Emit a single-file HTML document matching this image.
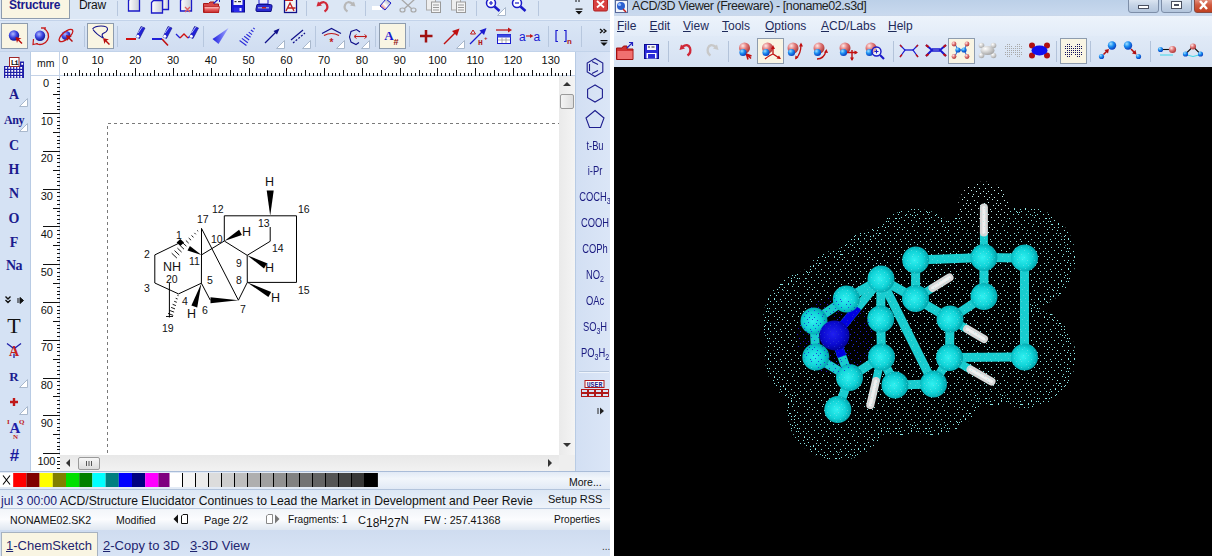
<!DOCTYPE html><html><head><meta charset="utf-8"><style>
html,body{margin:0;padding:0}
body{width:1212px;height:556px;overflow:hidden;position:relative;background:#fff;font-family:"Liberation Sans",sans-serif}
.a{position:absolute}
.t{position:absolute;white-space:nowrap;line-height:1}
</style></head><body>
<div class="a" style="left:0px;top:0px;width:610px;height:19px;background:#dce7f5"></div>
<div class="a" style="left:0px;top:19px;width:610px;height:1px;background:#eaf1fb"></div>
<div class="a" style="left:0px;top:20px;width:610px;height:1px;background:#c3d3ea"></div>
<div class="a" style="left:0px;top:21px;width:610px;height:31px;background:linear-gradient(#dae6f6,#d0ddf1)"></div>
<div class="a" style="left:0px;top:51px;width:610px;height:1px;background:#c2d3ea"></div>
<div class="a" style="left:1px;top:-2px;width:69px;height:21px;background:#f9f5e3;border:1px solid #8e9cae;box-sizing:border-box"></div>
<div class="t" style="left:9px;top:-1px;font-size:12px;color:#1a1a8c;letter-spacing:-0.25px"><b>Structure</b></div>
<div class="t" style="left:79px;top:-1px;font-size:12px;color:#111;letter-spacing:-0.3px">Draw</div>
<div class="a" style="left:1px;top:23px;width:27px;height:26px;background:#f9f5e3;border:1px solid #8e9cae;box-sizing:border-box"></div>
<div class="a" style="left:87px;top:23px;width:27px;height:26px;background:#f9f5e3;border:1px solid #8e9cae;box-sizing:border-box"></div>
<div class="a" style="left:379px;top:23px;width:27px;height:26px;background:#f9f5e3;border:1px solid #8e9cae;box-sizing:border-box"></div>
<div class="a" style="left:117px;top:1px;width:1px;height:15px;background:#b7c7de"></div>
<div class="a" style="left:306px;top:1px;width:1px;height:15px;background:#b7c7de"></div>
<div class="a" style="left:365px;top:1px;width:1px;height:15px;background:#b7c7de"></div>
<div class="a" style="left:476px;top:1px;width:1px;height:15px;background:#b7c7de"></div>
<div class="a" style="left:538px;top:1px;width:1px;height:15px;background:#b7c7de"></div>
<div class="a" style="left:84px;top:26px;width:1px;height:21px;background:#b7c7de"></div>
<div class="a" style="left:117px;top:26px;width:1px;height:21px;background:#b7c7de"></div>
<div class="a" style="left:203px;top:26px;width:1px;height:21px;background:#b7c7de"></div>
<div class="a" style="left:315px;top:26px;width:1px;height:21px;background:#b7c7de"></div>
<div class="a" style="left:375px;top:26px;width:1px;height:21px;background:#b7c7de"></div>
<div class="a" style="left:409px;top:26px;width:1px;height:21px;background:#b7c7de"></div>
<div class="a" style="left:548px;top:26px;width:1px;height:21px;background:#b7c7de"></div>
<div class="a" style="left:581px;top:26px;width:1px;height:21px;background:#b7c7de"></div>
<svg class="a" style="left:0px;top:0px;" width="610" height="20" viewBox="0 0 610 20"><defs><linearGradient id="dg" x1="0" x2="1"><stop offset="0" stop-color="#fff"/><stop offset="1" stop-color="#c8ccd4"/></linearGradient><linearGradient id="fg" x1="0" y1="0" x2="0" y2="1"><stop offset="0" stop-color="#ffd0d0"/><stop offset="0.5" stop-color="#e86060"/><stop offset="1" stop-color="#c02828"/></linearGradient><linearGradient id="erg" x1="0" y1="1" x2="1" y2="0"><stop offset="0" stop-color="#d01818"/><stop offset="0.45" stop-color="#fff"/><stop offset="1" stop-color="#8890a8"/></linearGradient></defs><path d="M128.5 0.5 L130.5 -1.5 H139.5 V11.0 H128.5 Z" fill="url(#dg)" stroke="#1a1ac8" stroke-width="1.3"/><path d="M162.5 -0.5 L164.5 -2.5 H168.5 V9.5 H162.5 Z" fill="url(#dg)" stroke="#1a1ac8" stroke-width="1.3"/><path d="M151.5 2.5 L153.5 0.5 H162.5 V13.0 H151.5 Z" fill="url(#dg)" stroke="#1a1ac8" stroke-width="1.3"/><path d="M180.5 0.5 L182.5 -1.5 H191.5 V11.0 H180.5 Z" fill="url(#dg)" stroke="#1a1ac8" stroke-width="1.3"/><path d="M185 7 L190 12 M190 7 L185 12" stroke="#e06060" stroke-width="1.3"/><path d="M203.5 3.5 H208.5 L210 2 H214 V4 H218.5 V12.5 H203.5 Z" fill="#d84848" stroke="#a81818"/><path d="M204 6.5 H219.5 L218.5 12.5 H204.5 Z" fill="url(#fg)" stroke="#b82020" stroke-width="0.8"/><path d="M213.5 3.5 L219 -1.5" stroke="#2020c0" stroke-width="1.2"/><path d="M216 -1.5 H219.5 V2" fill="none" stroke="#2020c0" stroke-width="1"/><rect x="231.5" y="-1" width="13" height="13" fill="#1a1ad8" stroke="#0a0a90"/><rect x="233.5" y="-1" width="9" height="6" fill="#f4f4f8"/><rect x="234.5" y="1" width="2" height="1.2" fill="#333"/><rect x="238" y="1" width="3" height="1.2" fill="#333"/><rect x="234" y="7.5" width="8" height="4.5" fill="#2a2ae8"/><rect x="239.5" y="8" width="2" height="3" fill="#e8e8f8"/><rect x="259" y="-1" width="9" height="5" fill="#eef" stroke="#1a1ac8"/><path d="M257 4.5 H270.5 Q272.5 4.5 272 7 L271 11.5 H257 Q255.5 11.5 256 9 Z" fill="#2a2ad0" stroke="#10108a"/><rect x="258" y="7" width="11" height="1.5" fill="#9aa0e0"/><rect x="262" y="7" width="4" height="1.5" fill="#c02020"/><rect x="284.5" y="-1" width="12" height="13.5" fill="#f4f4f4" stroke="#10108a" stroke-width="1.3"/><path d="M286 11 L290 3 L294 11 M287.5 8 H295.5" fill="none" stroke="#c02020" stroke-width="1.3"/><rect x="285" y="-1" width="8" height="2" fill="#c02020"/><path d="M319 4 Q325 0 327 5 Q328.5 9 324.5 11.5" fill="none" stroke="#d02838" stroke-width="2.2"/><path d="M316.5 6.5 L318 1.5 L322 5.5 Z" fill="#d02838"/><path d="M353 4 Q347 0 345 5 Q343.5 9 347.5 11.5" fill="none" stroke="#b8b8b8" stroke-width="2.2"/><path d="M355.5 6.5 L354 1.5 L350 5.5 Z" fill="#b8b8b8"/><rect x="372" y="6" width="10" height="4" fill="#fff"/><path d="M380 6 L386 -1 L391 3 L385 10 Z" fill="url(#erg)" stroke="#1a1ac8"/><path d="M401 -1 L412 9 M415 -1 L404 9" stroke="#a8a8a8" stroke-width="1.3"/><ellipse cx="402.5" cy="10" rx="2.5" ry="2" fill="none" stroke="#a8a8a8" stroke-width="1.2"/><ellipse cx="413.5" cy="10" rx="2.5" ry="2" fill="none" stroke="#a8a8a8" stroke-width="1.2"/><rect x="426.5" y="-1" width="9" height="11" fill="#eee" stroke="#aaa"/><rect x="431.5" y="2" width="9" height="10.5" fill="#f4f4f4" stroke="#999"/><path d="M433 5 h6 M433 7.5 h6 M433 10 h6" stroke="#999"/><rect x="451.5" y="-1" width="9" height="11" fill="#eee" stroke="#aaa"/><rect x="456.5" y="2" width="9" height="10.5" fill="#f4f4f4" stroke="#999"/><path d="M458 5 h6 M458 7.5 h6 M458 10 h6" stroke="#999"/><circle cx="491" cy="3" r="4.5" fill="#fff" stroke="#1a1ac8" stroke-width="1.5"/><path d="M489 3 h4 M491 1 v4" stroke="#1a1ac8" stroke-width="1.2"/><path d="M494.5 6.5 L499.5 11" stroke="#1a1ac8" stroke-width="2.5"/><circle cx="517" cy="3" r="4.5" fill="#fff" stroke="#1a1ac8" stroke-width="1.5"/><path d="M515 3 h4" stroke="#1a1ac8" stroke-width="1.2"/><path d="M520.5 6.5 L525.5 11" stroke="#1a1ac8" stroke-width="2.5"/><path d="M505.5 7.5 V15.5 H497.5 Z" fill="#fff" stroke="#a9b8cc"/><path d="M576 0 v2 M579 0 v2" stroke="#111"/><rect x="575.5" y="8.5" width="7" height="1.2" fill="#111"/><path d="M575.5 11 H582.5 L579 14.5 Z" fill="#111"/><rect x="593.5" y="-3" width="14" height="14" rx="1.5" fill="#d84040" stroke="#b02020"/><path d="M597 1 L604 7.5 M604 1 L597 7.5" stroke="#fff" stroke-width="1.8"/></svg>
<svg class="a" style="left:0px;top:0px;" width="610" height="52" viewBox="0 0 610 52"><defs><radialGradient id="bs" cx="0.4" cy="0.35" r="0.6"><stop offset="0" stop-color="#b0b8ff"/><stop offset="0.6" stop-color="#3a44e0"/><stop offset="1" stop-color="#1a20a0"/></radialGradient><linearGradient id="wg" x1="0" y1="0" x2="1" y2="0"><stop offset="0" stop-color="#2020e0"/><stop offset="1" stop-color="#a0a8ff"/></linearGradient></defs><circle cx="14" cy="35.5" r="5.2" fill="url(#bs)"/><path d="M15.5 37 L21.5 38.5 L19.0 39.5 L22.5 43 L21.5 44 L18.0 40.5 L17.0 43 Z" fill="#b80c0c"/><circle cx="40" cy="35.8" r="5.2" fill="url(#bs)"/><path d="M44 28.5 A8 8 0 0 1 36 43.5" fill="none" stroke="#c81818" stroke-width="1.4"/><path d="M33.5 39 L33 44.5 L38 43.5" fill="none" stroke="#c81818" stroke-width="1.2"/><path d="M41 28 H46" stroke="#c81818" stroke-width="1.4"/><circle cx="66" cy="35.5" r="4.6" fill="url(#bs)"/><ellipse cx="66" cy="35.5" rx="8.5" ry="3.5" transform="rotate(-40 66 35.5)" fill="none" stroke="#c81818" stroke-width="1.3"/><path d="M66 35 L72 36.5 L69.5 37.5 L73 41 L72 42 L68.5 38.5 L67.5 41 Z" fill="#b80c0c"/><path d="M92.5 29 Q95 26 101 26 Q108 26 107.5 29.5 Q107 32 103 33.5 Q101 35 103.5 38" fill="none" stroke="#10108a" stroke-width="1.1"/><path d="M93 29.5 Q96 34 103 38" fill="none" stroke="#10108a" stroke-width="1.1"/><path d="M103 38 L109 39.5 L106.5 40.5 L110 44 L109 45 L105.5 41.5 L104.5 44 Z" fill="#b80c0c"/><path d="M126 39 H136" stroke="#d01010" stroke-width="2"/><path d="M136 37 L141 26.5 L145 28 L139.5 38.5 Z" fill="#2222d8" stroke="#10108a" stroke-width="0.6"/><path d="M138 33 L142.2 27" stroke="#c8d0ff" stroke-width="0.9"/><circle cx="137.8" cy="36.2" r="1.5" fill="#fff"/><path d="M152 39 H162" stroke="#2020d8" stroke-width="2"/><path d="M162 39 L168 45.5" stroke="#c01010" stroke-width="1.6"/><path d="M163 37 L168 26.5 L172 28 L166.5 38.5 Z" fill="#2222d8" stroke="#10108a" stroke-width="0.6"/><path d="M165 33 L169.2 27" stroke="#c8d0ff" stroke-width="0.9"/><circle cx="164.8" cy="36.2" r="1.5" fill="#fff"/><path d="M176 34 L180 38" stroke="#2020d8" stroke-width="1.3"/><path d="M180 38 L184 34 L188 38" fill="none" stroke="#d01010" stroke-width="1.3"/><path d="M188 38 L190 36" stroke="#2020d8" stroke-width="1.3"/><path d="M189.5 37 L194.5 26.5 L198.5 28 L193.0 38.5 Z" fill="#2222d8" stroke="#10108a" stroke-width="0.6"/><path d="M191.5 33 L195.7 27" stroke="#c8d0ff" stroke-width="0.9"/><circle cx="191.3" cy="36.2" r="1.5" fill="#fff"/><path d="M212.5 39 L228.5 28 L218.5 44 Z" fill="url(#wg)"/><line x1="239.6" y1="40.5" x2="246.4" y2="45.5" stroke="#2a2ad8" stroke-width="1.1"/><line x1="241.9" y1="38.4" x2="247.8" y2="42.8" stroke="#2a2ad8" stroke-width="1.1"/><line x1="244.2" y1="36.3" x2="249.2" y2="40.0" stroke="#2a2ad8" stroke-width="1.1"/><line x1="246.4" y1="34.2" x2="250.6" y2="37.3" stroke="#2a2ad8" stroke-width="1.1"/><line x1="248.7" y1="32.1" x2="252.0" y2="34.6" stroke="#2a2ad8" stroke-width="1.1"/><line x1="250.9" y1="30.0" x2="253.4" y2="31.8" stroke="#2a2ad8" stroke-width="1.1"/><line x1="253.2" y1="27.9" x2="254.8" y2="29.1" stroke="#2a2ad8" stroke-width="1.1"/><path d="M265 43 L278 30" stroke="#10108a" stroke-width="1.2"/><path d="M279.5 28.5 L273.5 31 L277 34.5 Z" fill="#10108a"/><path d="M291 40 L303 30" stroke="#10108a" stroke-width="1.2"/><path d="M293 43 L305 33" stroke="#10108a" stroke-width="1.2" stroke-dasharray="2 1.5"/><path d="M284.5 40.5 V48.5 H276.5 Z" fill="#fff" stroke="#a9b8cc"/><path d="M310.5 40.5 V48.5 H302.5 Z" fill="#fff" stroke="#a9b8cc"/><path d="M344.5 40.5 V48.5 H336.5 Z" fill="#fff" stroke="#a9b8cc"/><path d="M369.5 40.5 V48.5 H361.5 Z" fill="#fff" stroke="#a9b8cc"/><path d="M464.5 40.5 V48.5 H456.5 Z" fill="#fff" stroke="#a9b8cc"/><path d="M322 33.5 L331.5 28.5 L341 33.5" fill="none" stroke="#10108a" stroke-width="1.2"/><path d="M324 35.5 Q331.5 31.5 339 35.5" fill="none" stroke="#c01818" stroke-width="1.2"/><text x="331.5" y="46" font-family="Liberation Sans" font-size="10" font-weight="bold" fill="#c01818" text-anchor="middle">*</text><path d="M360 32 L356.5 29.5 L351 31.5 L349.5 37 L351 42 L356 44.5 L359 42.5" fill="none" stroke="#10108a" stroke-width="1.1"/><path d="M355 36.5 H366" stroke="#c01818" stroke-width="1.1"/><path d="M356.5 34.5 L354 36.5 L356.5 38.5 M364.5 34.5 L367 36.5 L364.5 38.5" fill="none" stroke="#c01818" stroke-width="1"/><text x="389" y="39.5" font-family="Liberation Serif" font-weight="bold" font-size="13" fill="#1a1ad0" text-anchor="middle">A</text><text x="396" y="45" font-family="Liberation Sans" font-weight="bold" font-size="9" fill="#901010" text-anchor="middle">#</text><path d="M426 30 V42.5 M420 36 H432.5" stroke="#a01010" stroke-width="2.5"/><path d="M444 44 L457 31" stroke="#c01010" stroke-width="1.5"/><path d="M459.5 28.5 L452 31 L457 36 Z" fill="#c01010"/><path d="M470 44 L484 30" stroke="#1a1ad0" stroke-width="1.3"/><path d="M486.5 28 L479.5 30.5 L484 35 Z" fill="#1a1ad0"/><path d="M470.5 34 L473 30 L475.5 34 Z" fill="none" stroke="#c01818" stroke-width="1"/><text x="478" y="45" font-family="Liberation Mono" font-weight="bold" font-size="8" fill="#b01818">H</text><text x="484" y="40" font-family="Liberation Mono" font-weight="bold" font-size="6" fill="#b01818">+</text><path d="M496 30 H510" stroke="#c01818" stroke-width="1.3"/><path d="M512 30 L508 27.5 V32.5 Z" fill="#c01818"/><rect x="497.5" y="34.5" width="13" height="9" fill="#fff" stroke="#1a1ad0"/><rect x="497.5" y="34.5" width="13" height="3" fill="#3a4ae0"/><path d="M498 40 H510 M502 37.5 V43 M506 37.5 V43" stroke="#999" stroke-width="0.8"/><text x="519" y="40.5" font-family="Liberation Sans" font-size="12" fill="#1a1ad0">a</text><path d="M526 36 H532" stroke="#c01818" stroke-width="1.2"/><path d="M533.5 36 L530 34 V38 Z" fill="#c01818"/><text x="533.5" y="40.5" font-family="Liberation Sans" font-size="12" fill="#1a1ad0">a</text><path d="M558 30.5 H556 V41.5 H558 M564 30.5 H566 V41.5 H564" fill="none" stroke="#1a1ad0" stroke-width="1.2"/><text x="567" y="43.5" font-family="Liberation Mono" font-weight="bold" font-size="8" fill="#b01818">n</text><path d="M600 29 L602.5 31 L600 33 M603.5 29 L606 31 L603.5 33" fill="none" stroke="#111" stroke-width="1.3"/><rect x="600.5" y="40" width="7" height="1.2" fill="#111"/><path d="M600.5 42.5 H607.5 L604 46 Z" fill="#111"/></svg>
<div class="a" style="left:0px;top:52px;width:30px;height:420px;background:#d5e2f4"></div>
<div class="a" style="left:30px;top:52px;width:1px;height:420px;background:#b8cbe4"></div>
<div class="a" style="left:575px;top:52px;width:35px;height:420px;background:linear-gradient(90deg,#d2dff3,#dbe6f7)"></div>
<div class="a" style="left:575px;top:52px;width:1px;height:420px;background:#b8cbe4"></div>
<div class="a" style="left:31px;top:52px;width:544px;height:24px;background:#fff"></div>
<div class="a" style="left:31px;top:52px;width:29px;height:404px;background:#fff"></div>
<div class="a" style="left:31px;top:75px;width:544px;height:1px;background:#c5d3e8"></div>
<div class="a" style="left:59px;top:52px;width:1px;height:404px;background:#c5d3e8"></div>
<div class="a" style="left:60px;top:76px;width:499px;height:380px;background:#fff"></div>
<div class="a" style="left:559px;top:76px;width:16px;height:380px;background:#eef0f2"></div>
<div class="a" style="left:31px;top:456px;width:544px;height:16px;background:#eceff2"></div>
<svg class="a" style="left:0px;top:0px;" width="610" height="472" viewBox="0 0 610 472"><g fill="#111"><rect x="64" y="73" width="1" height="3"/><rect x="67" y="73" width="1" height="3"/><rect x="71" y="73" width="1" height="3"/><rect x="75" y="73" width="1" height="3"/><rect x="79" y="70" width="1" height="6"/><rect x="82" y="73" width="1" height="3"/><rect x="86" y="73" width="1" height="3"/><rect x="90" y="73" width="1" height="3"/><rect x="94" y="73" width="1" height="3"/><rect x="98" y="68" width="1" height="8"/><rect x="101" y="73" width="1" height="3"/><rect x="105" y="73" width="1" height="3"/><rect x="109" y="73" width="1" height="3"/><rect x="113" y="73" width="1" height="3"/><rect x="116" y="70" width="1" height="6"/><rect x="120" y="73" width="1" height="3"/><rect x="124" y="73" width="1" height="3"/><rect x="128" y="73" width="1" height="3"/><rect x="132" y="73" width="1" height="3"/><rect x="135" y="68" width="1" height="8"/><rect x="139" y="73" width="1" height="3"/><rect x="143" y="73" width="1" height="3"/><rect x="147" y="73" width="1" height="3"/><rect x="150" y="73" width="1" height="3"/><rect x="154" y="70" width="1" height="6"/><rect x="158" y="73" width="1" height="3"/><rect x="162" y="73" width="1" height="3"/><rect x="166" y="73" width="1" height="3"/><rect x="169" y="73" width="1" height="3"/><rect x="173" y="68" width="1" height="8"/><rect x="177" y="73" width="1" height="3"/><rect x="181" y="73" width="1" height="3"/><rect x="184" y="73" width="1" height="3"/><rect x="188" y="73" width="1" height="3"/><rect x="192" y="70" width="1" height="6"/><rect x="196" y="73" width="1" height="3"/><rect x="199" y="73" width="1" height="3"/><rect x="203" y="73" width="1" height="3"/><rect x="207" y="73" width="1" height="3"/><rect x="211" y="68" width="1" height="8"/><rect x="215" y="73" width="1" height="3"/><rect x="218" y="73" width="1" height="3"/><rect x="222" y="73" width="1" height="3"/><rect x="226" y="73" width="1" height="3"/><rect x="230" y="70" width="1" height="6"/><rect x="233" y="73" width="1" height="3"/><rect x="237" y="73" width="1" height="3"/><rect x="241" y="73" width="1" height="3"/><rect x="245" y="73" width="1" height="3"/><rect x="249" y="68" width="1" height="8"/><rect x="252" y="73" width="1" height="3"/><rect x="256" y="73" width="1" height="3"/><rect x="260" y="73" width="1" height="3"/><rect x="264" y="73" width="1" height="3"/><rect x="267" y="70" width="1" height="6"/><rect x="271" y="73" width="1" height="3"/><rect x="275" y="73" width="1" height="3"/><rect x="279" y="73" width="1" height="3"/><rect x="283" y="73" width="1" height="3"/><rect x="286" y="68" width="1" height="8"/><rect x="290" y="73" width="1" height="3"/><rect x="294" y="73" width="1" height="3"/><rect x="298" y="73" width="1" height="3"/><rect x="301" y="73" width="1" height="3"/><rect x="305" y="70" width="1" height="6"/><rect x="309" y="73" width="1" height="3"/><rect x="313" y="73" width="1" height="3"/><rect x="317" y="73" width="1" height="3"/><rect x="320" y="73" width="1" height="3"/><rect x="324" y="68" width="1" height="8"/><rect x="328" y="73" width="1" height="3"/><rect x="332" y="73" width="1" height="3"/><rect x="335" y="73" width="1" height="3"/><rect x="339" y="73" width="1" height="3"/><rect x="343" y="70" width="1" height="6"/><rect x="347" y="73" width="1" height="3"/><rect x="351" y="73" width="1" height="3"/><rect x="354" y="73" width="1" height="3"/><rect x="358" y="73" width="1" height="3"/><rect x="362" y="68" width="1" height="8"/><rect x="366" y="73" width="1" height="3"/><rect x="369" y="73" width="1" height="3"/><rect x="373" y="73" width="1" height="3"/><rect x="377" y="73" width="1" height="3"/><rect x="381" y="70" width="1" height="6"/><rect x="385" y="73" width="1" height="3"/><rect x="388" y="73" width="1" height="3"/><rect x="392" y="73" width="1" height="3"/><rect x="396" y="73" width="1" height="3"/><rect x="400" y="68" width="1" height="8"/><rect x="403" y="73" width="1" height="3"/><rect x="407" y="73" width="1" height="3"/><rect x="411" y="73" width="1" height="3"/><rect x="415" y="73" width="1" height="3"/><rect x="419" y="70" width="1" height="6"/><rect x="422" y="73" width="1" height="3"/><rect x="426" y="73" width="1" height="3"/><rect x="430" y="73" width="1" height="3"/><rect x="434" y="73" width="1" height="3"/><rect x="437" y="68" width="1" height="8"/><rect x="441" y="73" width="1" height="3"/><rect x="445" y="73" width="1" height="3"/><rect x="449" y="73" width="1" height="3"/><rect x="453" y="73" width="1" height="3"/><rect x="456" y="70" width="1" height="6"/><rect x="460" y="73" width="1" height="3"/><rect x="464" y="73" width="1" height="3"/><rect x="468" y="73" width="1" height="3"/><rect x="471" y="73" width="1" height="3"/><rect x="475" y="68" width="1" height="8"/><rect x="479" y="73" width="1" height="3"/><rect x="483" y="73" width="1" height="3"/><rect x="487" y="73" width="1" height="3"/><rect x="490" y="73" width="1" height="3"/><rect x="494" y="70" width="1" height="6"/><rect x="498" y="73" width="1" height="3"/><rect x="502" y="73" width="1" height="3"/><rect x="505" y="73" width="1" height="3"/><rect x="509" y="73" width="1" height="3"/><rect x="513" y="68" width="1" height="8"/><rect x="517" y="73" width="1" height="3"/><rect x="521" y="73" width="1" height="3"/><rect x="524" y="73" width="1" height="3"/><rect x="528" y="73" width="1" height="3"/><rect x="532" y="70" width="1" height="6"/><rect x="536" y="73" width="1" height="3"/><rect x="539" y="73" width="1" height="3"/><rect x="543" y="73" width="1" height="3"/><rect x="547" y="73" width="1" height="3"/><rect x="551" y="68" width="1" height="8"/><rect x="555" y="73" width="1" height="3"/><rect x="558" y="73" width="1" height="3"/><rect x="562" y="73" width="1" height="3"/><rect x="566" y="73" width="1" height="3"/><rect x="570" y="70" width="1" height="6"/><rect x="57" y="79" width="3" height="1"/><rect x="57" y="83" width="3" height="1"/><rect x="57" y="87" width="3" height="1"/><rect x="57" y="91" width="3" height="1"/><rect x="53" y="94" width="7" height="1"/><rect x="57" y="98" width="3" height="1"/><rect x="57" y="102" width="3" height="1"/><rect x="57" y="106" width="3" height="1"/><rect x="57" y="109" width="3" height="1"/><rect x="43" y="113" width="17" height="1"/><rect x="57" y="117" width="3" height="1"/><rect x="57" y="121" width="3" height="1"/><rect x="57" y="125" width="3" height="1"/><rect x="57" y="128" width="3" height="1"/><rect x="53" y="132" width="7" height="1"/><rect x="57" y="136" width="3" height="1"/><rect x="57" y="140" width="3" height="1"/><rect x="57" y="143" width="3" height="1"/><rect x="57" y="147" width="3" height="1"/><rect x="43" y="151" width="17" height="1"/><rect x="57" y="155" width="3" height="1"/><rect x="57" y="158" width="3" height="1"/><rect x="57" y="162" width="3" height="1"/><rect x="57" y="166" width="3" height="1"/><rect x="53" y="170" width="7" height="1"/><rect x="57" y="174" width="3" height="1"/><rect x="57" y="177" width="3" height="1"/><rect x="57" y="181" width="3" height="1"/><rect x="57" y="185" width="3" height="1"/><rect x="43" y="189" width="17" height="1"/><rect x="57" y="192" width="3" height="1"/><rect x="57" y="196" width="3" height="1"/><rect x="57" y="200" width="3" height="1"/><rect x="57" y="204" width="3" height="1"/><rect x="53" y="208" width="7" height="1"/><rect x="57" y="211" width="3" height="1"/><rect x="57" y="215" width="3" height="1"/><rect x="57" y="219" width="3" height="1"/><rect x="57" y="223" width="3" height="1"/><rect x="43" y="226" width="17" height="1"/><rect x="57" y="230" width="3" height="1"/><rect x="57" y="234" width="3" height="1"/><rect x="57" y="238" width="3" height="1"/><rect x="57" y="242" width="3" height="1"/><rect x="53" y="245" width="7" height="1"/><rect x="57" y="249" width="3" height="1"/><rect x="57" y="253" width="3" height="1"/><rect x="57" y="257" width="3" height="1"/><rect x="57" y="260" width="3" height="1"/><rect x="43" y="264" width="17" height="1"/><rect x="57" y="268" width="3" height="1"/><rect x="57" y="272" width="3" height="1"/><rect x="57" y="276" width="3" height="1"/><rect x="57" y="279" width="3" height="1"/><rect x="53" y="283" width="7" height="1"/><rect x="57" y="287" width="3" height="1"/><rect x="57" y="291" width="3" height="1"/><rect x="57" y="294" width="3" height="1"/><rect x="57" y="298" width="3" height="1"/><rect x="43" y="302" width="17" height="1"/><rect x="57" y="306" width="3" height="1"/><rect x="57" y="310" width="3" height="1"/><rect x="57" y="313" width="3" height="1"/><rect x="57" y="317" width="3" height="1"/><rect x="53" y="321" width="7" height="1"/><rect x="57" y="325" width="3" height="1"/><rect x="57" y="328" width="3" height="1"/><rect x="57" y="332" width="3" height="1"/><rect x="57" y="336" width="3" height="1"/><rect x="43" y="340" width="17" height="1"/><rect x="57" y="344" width="3" height="1"/><rect x="57" y="347" width="3" height="1"/><rect x="57" y="351" width="3" height="1"/><rect x="57" y="355" width="3" height="1"/><rect x="53" y="359" width="7" height="1"/><rect x="57" y="362" width="3" height="1"/><rect x="57" y="366" width="3" height="1"/><rect x="57" y="370" width="3" height="1"/><rect x="57" y="374" width="3" height="1"/><rect x="43" y="378" width="17" height="1"/><rect x="57" y="381" width="3" height="1"/><rect x="57" y="385" width="3" height="1"/><rect x="57" y="389" width="3" height="1"/><rect x="57" y="393" width="3" height="1"/><rect x="53" y="396" width="7" height="1"/><rect x="57" y="400" width="3" height="1"/><rect x="57" y="404" width="3" height="1"/><rect x="57" y="408" width="3" height="1"/><rect x="57" y="412" width="3" height="1"/><rect x="43" y="415" width="17" height="1"/><rect x="57" y="419" width="3" height="1"/><rect x="57" y="423" width="3" height="1"/><rect x="57" y="427" width="3" height="1"/><rect x="57" y="430" width="3" height="1"/><rect x="53" y="434" width="7" height="1"/><rect x="57" y="438" width="3" height="1"/><rect x="57" y="442" width="3" height="1"/><rect x="57" y="446" width="3" height="1"/><rect x="57" y="449" width="3" height="1"/><rect x="43" y="453" width="17" height="1"/></g></svg>
<div class="t" style="left:62px;top:55px;font-size:11px;color:#111">0</div>
<div class="t" style="left:77.5px;top:55px;width:40px;text-align:center;font-size:11px;color:#111">10</div>
<div class="t" style="left:115.3px;top:55px;width:40px;text-align:center;font-size:11px;color:#111">20</div>
<div class="t" style="left:153.1px;top:55px;width:40px;text-align:center;font-size:11px;color:#111">30</div>
<div class="t" style="left:190.8px;top:55px;width:40px;text-align:center;font-size:11px;color:#111">40</div>
<div class="t" style="left:228.6px;top:55px;width:40px;text-align:center;font-size:11px;color:#111">50</div>
<div class="t" style="left:266.4px;top:55px;width:40px;text-align:center;font-size:11px;color:#111">60</div>
<div class="t" style="left:304.1px;top:55px;width:40px;text-align:center;font-size:11px;color:#111">70</div>
<div class="t" style="left:341.9px;top:55px;width:40px;text-align:center;font-size:11px;color:#111">80</div>
<div class="t" style="left:379.7px;top:55px;width:40px;text-align:center;font-size:11px;color:#111">90</div>
<div class="t" style="left:417.4px;top:55px;width:40px;text-align:center;font-size:11px;color:#111">100</div>
<div class="t" style="left:455.2px;top:55px;width:40px;text-align:center;font-size:11px;color:#111">110</div>
<div class="t" style="left:493.0px;top:55px;width:40px;text-align:center;font-size:11px;color:#111">120</div>
<div class="t" style="left:530.8px;top:55px;width:40px;text-align:center;font-size:11px;color:#111">130</div>
<div class="t" style="left:37px;top:58px;font-size:10.5px;color:#111">mm</div>
<div class="t" style="left:43px;top:77.5px;font-size:11px;color:#111">0</div>
<div class="t" style="left:13px;top:115.7px;width:40px;text-align:right;font-size:11px;color:#111">10</div>
<div class="t" style="left:13px;top:153.4px;width:40px;text-align:right;font-size:11px;color:#111">20</div>
<div class="t" style="left:13px;top:191.2px;width:40px;text-align:right;font-size:11px;color:#111">30</div>
<div class="t" style="left:13px;top:229.0px;width:40px;text-align:right;font-size:11px;color:#111">40</div>
<div class="t" style="left:13px;top:266.8px;width:40px;text-align:right;font-size:11px;color:#111">50</div>
<div class="t" style="left:13px;top:304.5px;width:40px;text-align:right;font-size:11px;color:#111">60</div>
<div class="t" style="left:13px;top:342.3px;width:40px;text-align:right;font-size:11px;color:#111">70</div>
<div class="t" style="left:13px;top:380.1px;width:40px;text-align:right;font-size:11px;color:#111">80</div>
<div class="t" style="left:13px;top:417.8px;width:40px;text-align:right;font-size:11px;color:#111">90</div>
<svg class="a" style="left:60px;top:76px;" width="499" height="379" viewBox="0 0 499 379"><path d="M47.5 455 V47.5 H499" fill="none" stroke="#7a7a7a" stroke-width="1" stroke-dasharray="3 3"/></svg>
<svg class="a" style="left:4px;top:57px;" width="21" height="21" viewBox="0 0 21 21"><rect x="0" y="9" width="20" height="12" fill="#1e1ea8"/><rect x="16" y="4.5" width="4" height="5" fill="#1e1ea8"/><rect x="1.3" y="10" width="1.8" height="1.8" fill="#fff"/><rect x="4.3" y="10" width="1.8" height="1.8" fill="#fff"/><rect x="7.3" y="10" width="1.8" height="1.8" fill="#fff"/><rect x="10.3" y="10" width="1.8" height="1.8" fill="#fff"/><rect x="13.3" y="10" width="1.8" height="1.8" fill="#fff"/><rect x="16.3" y="10" width="1.8" height="1.8" fill="#fff"/><rect x="1.3" y="13" width="1.8" height="1.8" fill="#fff"/><rect x="4.3" y="13" width="1.8" height="1.8" fill="#fff"/><rect x="7.3" y="13" width="1.8" height="1.8" fill="#fff"/><rect x="10.3" y="13" width="1.8" height="1.8" fill="#fff"/><rect x="13.3" y="13" width="1.8" height="1.8" fill="#fff"/><rect x="16.3" y="13" width="1.8" height="1.8" fill="#fff"/><rect x="1.3" y="16" width="1.8" height="1.8" fill="#fff"/><rect x="4.3" y="16" width="1.8" height="1.8" fill="#fff"/><rect x="7.3" y="16" width="1.8" height="1.8" fill="#fff"/><rect x="10.3" y="16" width="1.8" height="1.8" fill="#fff"/><rect x="13.3" y="16" width="1.8" height="1.8" fill="#fff"/><rect x="16.3" y="16" width="1.8" height="1.8" fill="#fff"/><rect x="1.3" y="19" width="1.8" height="1.8" fill="#fff"/><rect x="4.3" y="19" width="1.8" height="1.8" fill="#fff"/><rect x="7.3" y="19" width="1.8" height="1.8" fill="#fff"/><rect x="10.3" y="19" width="1.8" height="1.8" fill="#fff"/><rect x="13.3" y="19" width="1.8" height="1.8" fill="#fff"/><rect x="16.3" y="19" width="1.8" height="1.8" fill="#fff"/><rect x="17.3" y="6" width="1.8" height="1.8" fill="#fff"/><rect x="5.5" y="0.5" width="9.5" height="9" fill="#fff" stroke="#a02828"/><text x="10.3" y="7.6" font-family="Liberation Mono" font-size="7.5" font-weight="bold" fill="#111" text-anchor="middle" letter-spacing="-1">Li</text></svg>
<div class="t" style="left:-6px;top:95px;width:40px;text-align:center;font-family:'Liberation Serif', serif;font-weight:bold;font-size:14px;color:#1b1b8e;line-height:0;">A</div>
<svg class="a" style="left:19px;top:98px;" width="9" height="9" viewBox="0 0 9 9"><path d="M8.5 0.5 V8.5 H0.5 Z" fill="#fff" stroke="#a9b8cc" stroke-width="1"/></svg>
<div class="t" style="left:-6px;top:120px;width:40px;text-align:center;font-family:'Liberation Serif', serif;font-weight:bold;font-size:12px;color:#1b1b8e;line-height:0;letter-spacing:-0.5px">Any</div>
<svg class="a" style="left:19px;top:123px;" width="9" height="9" viewBox="0 0 9 9"><path d="M8.5 0.5 V8.5 H0.5 Z" fill="#fff" stroke="#a9b8cc" stroke-width="1"/></svg>
<div class="t" style="left:-6px;top:146px;width:40px;text-align:center;font-family:'Liberation Serif', serif;font-weight:bold;font-size:14px;color:#1b1b8e;line-height:0;">C</div>
<div class="t" style="left:-6px;top:170px;width:40px;text-align:center;font-family:'Liberation Serif', serif;font-weight:bold;font-size:14px;color:#1b1b8e;line-height:0;">H</div>
<div class="t" style="left:-6px;top:194px;width:40px;text-align:center;font-family:'Liberation Serif', serif;font-weight:bold;font-size:14px;color:#1b1b8e;line-height:0;">N</div>
<div class="t" style="left:-6px;top:219px;width:40px;text-align:center;font-family:'Liberation Serif', serif;font-weight:bold;font-size:14px;color:#1b1b8e;line-height:0;">O</div>
<div class="t" style="left:-6px;top:243px;width:40px;text-align:center;font-family:'Liberation Serif', serif;font-weight:bold;font-size:14px;color:#1b1b8e;line-height:0;">F</div>
<div class="t" style="left:-6px;top:266px;width:40px;text-align:center;font-family:'Liberation Serif', serif;font-weight:bold;font-size:14px;color:#1b1b8e;line-height:0;letter-spacing:-0.5px">Na</div>
<svg class="a" style="left:4px;top:295px;" width="22" height="10" viewBox="0 0 22 10"><path d="M1.5 1.5 L4 4 L6.5 1.5 M1.5 5 L4 7.5 L6.5 5" fill="none" stroke="#111" stroke-width="1.4"/><path d="M14 3 v5 M16 2.5 L19.5 5.5 L16 8.5 Z" stroke="#111" stroke-width="1" fill="#111"/></svg>
<div class="t" style="left:-6px;top:326px;width:40px;text-align:center;font-family:'Liberation Serif', serif;font-weight:bold;font-size:22px;color:#111;line-height:0;font-weight:normal">T</div>
<svg class="a" style="left:5px;top:342px;" width="18" height="17" viewBox="0 0 18 17"><text x="9" y="14" font-family="Liberation Serif" font-weight="bold" font-size="14" fill="#c82020" text-anchor="middle">A</text><path d="M2 1.5 L8 6 M16 1.5 L10 6 M9 11.5 V16" stroke="#1e1ea8" stroke-width="1.3"/></svg>
<div class="t" style="left:-6px;top:377px;width:40px;text-align:center;font-family:'Liberation Serif', serif;font-weight:bold;font-size:13px;color:#1b1b8e;line-height:0;">R</div>
<svg class="a" style="left:19px;top:379px;" width="9" height="9" viewBox="0 0 9 9"><path d="M8.5 0.5 V8.5 H0.5 Z" fill="#fff" stroke="#a9b8cc" stroke-width="1"/></svg>
<svg class="a" style="left:9px;top:397px;" width="10" height="10" viewBox="0 0 10 10"><path d="M5 1 V9 M1 5 H9" stroke="#c01818" stroke-width="2.4"/></svg>
<svg class="a" style="left:19px;top:406px;" width="9" height="9" viewBox="0 0 9 9"><path d="M8.5 0.5 V8.5 H0.5 Z" fill="#fff" stroke="#a9b8cc" stroke-width="1"/></svg>
<svg class="a" style="left:5px;top:417px;" width="20" height="22" viewBox="0 0 20 22"><text x="10" y="16" font-family="Liberation Serif" font-weight="bold" font-size="15" fill="#1e1ea8" text-anchor="middle">A</text><text x="2" y="7" font-family="Liberation Serif" font-weight="bold" font-size="7" fill="#c01818">I</text><text x="14" y="7" font-family="Liberation Serif" font-weight="bold" font-size="7" fill="#c01818">Q</text><text x="8" y="22" font-family="Liberation Serif" font-weight="bold" font-size="7" fill="#c01818">N</text></svg>
<div class="t" style="left:0px;top:447px;width:29px;text-align:center;font-family:Liberation Sans;font-weight:bold;font-size:17px;color:#1b1b9e">#</div>
<svg class="a" style="left:585px;top:57px;" width="20" height="22" viewBox="0 0 20 22"><path d="M10.0 1.5 L2.2 6.0 L2.2 15.0 L10.0 19.5 L17.8 15.0 L17.8 6.0 Z" fill="none" stroke="#1e1e8e" stroke-width="1.1"/><path d="M4.5 7 V14 M7 4.5 L13 7.5 M7 16.5 L13 13.5" stroke="#1e1e8e" stroke-width="1.1"/></svg>
<svg class="a" style="left:585px;top:83px;" width="20" height="22" viewBox="0 0 20 22"><path d="M10.0 2.0 L2.6 6.3 L2.6 14.8 L10.0 19.0 L17.4 14.8 L17.4 6.2 Z" fill="none" stroke="#1e1e8e" stroke-width="1.1"/></svg>
<svg class="a" style="left:584px;top:109px;" width="22" height="20" viewBox="0 0 22 20"><path d="M11 1.5 L20 9 L16.5 18.5 H5.5 L2 9 Z" fill="none" stroke="#1e1e8e" stroke-width="1.1"/></svg>
<div class="t" style="left:560px;top:146px;width:70px;text-align:center;font-size:12px;color:#1a1a80;line-height:0;transform:scaleX(0.78);transform-origin:35px 0">t-Bu</div>
<div class="t" style="left:560px;top:171px;width:70px;text-align:center;font-size:12px;color:#1a1a80;line-height:0;transform:scaleX(0.78);transform-origin:35px 0">i-Pr</div>
<div class="t" style="left:560px;top:197px;width:70px;text-align:center;font-size:12px;color:#1a1a80;line-height:0;transform:scaleX(0.78);transform-origin:35px 0">COCH<sub style="font-size:9px;vertical-align:-3px">3</sub></div>
<div class="t" style="left:560px;top:223px;width:70px;text-align:center;font-size:12px;color:#1a1a80;line-height:0;transform:scaleX(0.78);transform-origin:35px 0">COOH</div>
<div class="t" style="left:560px;top:249px;width:70px;text-align:center;font-size:12px;color:#1a1a80;line-height:0;transform:scaleX(0.78);transform-origin:35px 0">COPh</div>
<div class="t" style="left:560px;top:275px;width:70px;text-align:center;font-size:12px;color:#1a1a80;line-height:0;transform:scaleX(0.78);transform-origin:35px 0">NO<sub style="font-size:9px;vertical-align:-3px">2</sub></div>
<div class="t" style="left:560px;top:301px;width:70px;text-align:center;font-size:12px;color:#1a1a80;line-height:0;transform:scaleX(0.78);transform-origin:35px 0">OAc</div>
<div class="t" style="left:560px;top:327px;width:70px;text-align:center;font-size:12px;color:#1a1a80;line-height:0;transform:scaleX(0.78);transform-origin:35px 0">SO<sub style="font-size:9px;vertical-align:-3px">3</sub>H</div>
<div class="t" style="left:560px;top:353px;width:70px;text-align:center;font-size:12px;color:#1a1a80;line-height:0;transform:scaleX(0.78);transform-origin:35px 0">PO<sub style="font-size:9px;vertical-align:-3px">3</sub>H<sub style="font-size:9px;vertical-align:-3px">2</sub></div>
<div class="a" style="left:579px;top:371px;width:30px;height:1px;background:#b8c8de"></div>
<div class="a" style="left:579px;top:372px;width:30px;height:1px;background:#eef4fc"></div>
<svg class="a" style="left:581px;top:380px;" width="28" height="18" viewBox="0 0 28 18"><rect x="4" y="0.5" width="19" height="7" fill="#fff" stroke="#b01818"/><text x="13.5" y="6.5" font-family="Liberation Mono" font-weight="bold" font-size="6.5" fill="#1e1e8e" text-anchor="middle">USER</text><rect x="0.5" y="9.5" width="6" height="3" fill="none" stroke="#b01818"/><rect x="7.5" y="9.5" width="6" height="3" fill="none" stroke="#b01818"/><rect x="14.5" y="9.5" width="6" height="3" fill="none" stroke="#b01818"/><rect x="21.5" y="9.5" width="6" height="3" fill="none" stroke="#b01818"/><rect x="0.5" y="13.5" width="6" height="3" fill="none" stroke="#b01818"/><rect x="7.5" y="13.5" width="6" height="3" fill="none" stroke="#b01818"/><rect x="14.5" y="13.5" width="6" height="3" fill="none" stroke="#b01818"/><rect x="21.5" y="13.5" width="6" height="3" fill="none" stroke="#b01818"/></svg>
<svg class="a" style="left:597px;top:407px;" width="9" height="8" viewBox="0 0 9 8"><path d="M1 1 v6" stroke="#222"/><path d="M3 0.5 L7 4 L3 7.5 Z" fill="#222"/></svg>
<div class="a" style="left:559px;top:76px;width:16px;height:379px;background:linear-gradient(90deg,#eaeaea,#f4f4f4)"></div>
<svg class="a" style="left:559px;top:76px;" width="16" height="379" viewBox="0 0 16 379"><path d="M4 10 L8 6 L12 10 Z" fill="#333"/><path d="M4 367 L12 367 L8 371 Z" fill="#333"/></svg>
<div class="a" style="left:560px;top:94px;width:14px;height:15px;background:linear-gradient(90deg,#f4f4f4,#dedede);border:1px solid #9a9a9a;border-radius:2px;box-sizing:border-box"></div>
<div class="a" style="left:60px;top:455px;width:499px;height:16px;background:linear-gradient(#e8e8e8,#f2f2f2)"></div>
<svg class="a" style="left:60px;top:455px;" width="499" height="16" viewBox="0 0 499 16"><path d="M10 4 L6 8 L10 12 Z" fill="#333"/><path d="M488 4 L492 8 L488 12 Z" fill="#333"/></svg>
<div class="a" style="left:78px;top:457px;width:22px;height:13px;background:linear-gradient(#f7f7f7,#dcdcdc);border:1px solid #9a9a9a;border-radius:2px;box-sizing:border-box"></div>
<svg class="a" style="left:78px;top:457px;" width="22" height="13" viewBox="0 0 22 13"><path d="M8.5 4 V9 M11 4 V9 M13.5 4 V9" stroke="#555" stroke-width="1"/></svg>
<div class="a" style="left:559px;top:455px;width:16px;height:16px;background:#eeeeee"></div>
<div class="a" style="left:31px;top:455px;width:29px;height:17px;background:#fff"></div>
<svg class="a" style="left:31px;top:450px;" width="29" height="22" viewBox="0 0 29 22"><rect x="12" y="3" width="17" height="1" fill="#111"/><g fill="#111"><rect x="26" y="7" width="3" height="1"/><rect x="26" y="11" width="3" height="1"/><rect x="26" y="14" width="3" height="1"/><rect x="26" y="18" width="3" height="1"/></g></svg>
<div class="t" style="left:15px;top:455.5px;width:40px;text-align:right;font-size:11px;color:#111;letter-spacing:-0.3px">100</div>
<div class="a" style="left:0px;top:471px;width:610px;height:19px;background:linear-gradient(#dfe8f5,#f2f6fb 40%,#dfe8f5)"></div>
<div class="a" style="left:0px;top:471px;width:610px;height:1px;background:#a9bcd8"></div>
<div class="a" style="left:0px;top:489px;width:610px;height:1px;background:#b3c4dc"></div>
<svg class="a" style="left:0px;top:473px;" width="380" height="14" viewBox="0 0 380 14"><rect x="0" y="0" width="13" height="14" fill="#fff"/><path d="M3 2.5 L10 11.5 M10 2.5 L3 11.5" stroke="#000" stroke-width="1.1"/><rect x="13.2" y="0" width="13.2" height="14" fill="#ff0000"/><rect x="26.4" y="0" width="13.2" height="14" fill="#800000"/><rect x="39.6" y="0" width="13.2" height="14" fill="#ffff00"/><rect x="52.8" y="0" width="13.2" height="14" fill="#808000"/><rect x="66.0" y="0" width="13.2" height="14" fill="#00e000"/><rect x="79.2" y="0" width="13.2" height="14" fill="#008000"/><rect x="92.4" y="0" width="13.2" height="14" fill="#00ffff"/><rect x="105.6" y="0" width="13.2" height="14" fill="#008080"/><rect x="118.8" y="0" width="13.2" height="14" fill="#0000ff"/><rect x="132.0" y="0" width="13.2" height="14" fill="#000080"/><rect x="145.2" y="0" width="13.2" height="14" fill="#ff00ff"/><rect x="158.4" y="0" width="13.2" height="14" fill="#800080"/><rect x="169.5" y="0" width="13.1" height="14" fill="rgb(255,255,255)"/><rect x="182.5" y="0" width="13.1" height="14" fill="rgb(245,245,245)"/><rect x="195.5" y="0" width="13.1" height="14" fill="rgb(235,235,235)"/><rect x="208.6" y="0" width="13.1" height="14" fill="rgb(220,220,220)"/><rect x="221.6" y="0" width="13.1" height="14" fill="rgb(205,205,205)"/><rect x="234.6" y="0" width="13.1" height="14" fill="rgb(190,190,190)"/><rect x="247.6" y="0" width="13.1" height="14" fill="rgb(175,175,175)"/><rect x="260.6" y="0" width="13.1" height="14" fill="rgb(160,160,160)"/><rect x="273.7" y="0" width="13.1" height="14" fill="rgb(145,145,145)"/><rect x="286.7" y="0" width="13.1" height="14" fill="rgb(130,130,130)"/><rect x="299.7" y="0" width="13.1" height="14" fill="rgb(115,115,115)"/><rect x="312.7" y="0" width="13.1" height="14" fill="rgb(100,100,100)"/><rect x="325.7" y="0" width="13.1" height="14" fill="rgb(85,85,85)"/><rect x="338.8" y="0" width="13.1" height="14" fill="rgb(70,70,70)"/><rect x="351.8" y="0" width="13.1" height="14" fill="rgb(55,55,55)"/><rect x="364.8" y="0" width="13.1" height="14" fill="rgb(0,0,0)"/><rect x="182" y="0" width="1" height="14" fill="#000"/><rect x="195" y="0" width="1" height="14" fill="#000"/><rect x="208" y="0" width="1" height="14" fill="#000"/><rect x="221" y="0" width="1" height="14" fill="#000"/><rect x="234" y="0" width="1" height="14" fill="#000"/><rect x="247" y="0" width="1" height="14" fill="#000"/><rect x="260" y="0" width="1" height="14" fill="#000"/><rect x="273" y="0" width="1" height="14" fill="#000"/><rect x="286" y="0" width="1" height="14" fill="#000"/><rect x="299" y="0" width="1" height="14" fill="#000"/><rect x="312" y="0" width="1" height="14" fill="#000"/><rect x="325" y="0" width="1" height="14" fill="#000"/><rect x="338" y="0" width="1" height="14" fill="#000"/><rect x="351" y="0" width="1" height="14" fill="#000"/><rect x="364" y="0" width="1" height="14" fill="#000"/></svg>
<div class="t" style="left:569px;top:477px;font-size:10.5px;color:#111">More...</div>
<div class="a" style="left:0px;top:490px;width:610px;height:19px;background:linear-gradient(#dce7f5,#eef3fa)"></div>
<div class="a" style="left:0px;top:508px;width:610px;height:1px;background:#b9c9df"></div>
<div class="t" style="left:1px;top:495px;font-size:12.15px;color:#111"><span style="color:#1a1a78">jul 3 00:00</span> ACD/Structure Elucidator Continues to Lead the Market in Development and Peer Revie</div>
<div class="a" style="left:540px;top:490px;width:70px;height:18px;background:linear-gradient(#dce7f5,#eef3fa)"></div>
<div class="t" style="left:548px;top:494px;font-size:11px;color:#111">Setup RSS</div>
<div class="a" style="left:0px;top:509px;width:610px;height:21px;background:linear-gradient(#f2f5f9,#fbfcfe 50%,#dfe7f1)"></div>
<div class="t" style="left:10px;top:515px;font-size:10.6px;color:#111">NONAME02.SK2</div>
<div class="t" style="left:116px;top:515px;font-size:10.5px;color:#111">Modified</div>
<svg class="a" style="left:173px;top:513px;" width="16" height="12" viewBox="0 0 16 12"><path d="M5 1.5 L0.5 6 L5 10.5 Z" fill="#111"/><path d="M8.5 3 L10 1.5 H14.5 V10.5 H8.5 Z" fill="#fff" stroke="#111"/></svg>
<div class="t" style="left:204px;top:515px;font-size:11px;color:#111">Page 2/2</div>
<svg class="a" style="left:265px;top:513px;" width="16" height="12" viewBox="0 0 16 12"><path d="M1.5 3 L3 1.5 H7.5 V10.5 H1.5 Z" fill="#fff" stroke="#888"/><path d="M10 1.5 L14.5 6 L10 10.5 Z" fill="#777"/></svg>
<div class="t" style="left:288px;top:515px;font-size:10.1px;color:#111">Fragments: 1</div>
<div class="t" style="left:358px;top:514px;font-size:11px;color:#111">C<span style="font-size:12px;position:relative;top:3px">18</span>H<span style="font-size:12px;position:relative;top:3px">27</span>N</div>
<div class="t" style="left:424px;top:515px;font-size:10.75px;color:#111">FW : 257.41368</div>
<div class="t" style="left:554px;top:515px;font-size:10.1px;color:#111">Properties</div>
<div class="a" style="left:0px;top:530px;width:610px;height:26px;background:linear-gradient(#cfdcf0,#d8e4f5)"></div>
<div class="a" style="left:1px;top:532px;width:97px;height:26px;background:#f9f5e3;border:1px solid #a7b2c0;box-sizing:border-box"></div>
<div class="t" style="left:6px;top:539px;font-size:13px;color:#1e2570"><u>1</u>-ChemSketch</div>
<div class="t" style="left:103px;top:539px;font-size:13px;color:#1e2570"><u>2</u>-Copy to 3D</div>
<div class="t" style="left:190px;top:539px;font-size:13px;color:#1e2570"><u>3</u>-3D View</div>
<div class="t" style="left:602px;top:542px;font-size:10px;color:#333">...</div>
<svg class="a" style="left:0px;top:0px;" width="330" height="340" viewBox="0 0 330 340"><g stroke="#000" stroke-width="1" fill="none"><line x1="154.8" y1="254.9" x2="180.3" y2="242.5"/><line x1="154.8" y1="254.9" x2="154.8" y2="283.0"/><line x1="154.8" y1="283.0" x2="178.5" y2="293.9"/><line x1="178.5" y1="293.9" x2="201.4" y2="283.2"/><line x1="201.4" y1="283.2" x2="201.5" y2="254.9"/><line x1="201.5" y1="254.9" x2="201.5" y2="228.4"/><line x1="201.5" y1="254.9" x2="224.3" y2="241.0"/><line x1="224.3" y1="215.8" x2="224.3" y2="241.0"/><line x1="224.3" y1="215.8" x2="270.2" y2="215.8"/><line x1="270.2" y1="215.8" x2="296.5" y2="215.8"/><line x1="296.5" y1="215.8" x2="296.5" y2="282.4"/><line x1="296.5" y1="282.4" x2="247.3" y2="282.4"/><line x1="247.3" y1="282.4" x2="247.2" y2="255.3"/><line x1="224.3" y1="241.0" x2="247.2" y2="255.3"/><line x1="247.2" y1="255.3" x2="270.2" y2="241.3"/><line x1="201.4" y1="283.2" x2="210.3" y2="300.2"/><line x1="238.4" y1="300.2" x2="247.3" y2="282.4"/><line x1="201.5" y1="228.4" x2="238.4" y2="300.2"/><line x1="270.2" y1="227" x2="270.2" y2="241.3"/><line x1="169.4" y1="283" x2="169.4" y2="317.5"/></g><path d="M270.2 215.8 L273.7 190.5 L266.7 190.5 Z" fill="#000"/><path d="M224.3 241.0 L241.9 234.9 L239.1 229.7 Z" fill="#000"/><path d="M247.2 255.3 L264.0 268.4 L267.0 263.2 Z" fill="#000"/><path d="M247.3 282.4 L268.4 297.1 L271.2 291.9 Z" fill="#000"/><path d="M201.4 283.2 L191.4 305.6 L197.2 307.4 Z" fill="#000"/><path d="M238.4 300.2 L210.5 297.2 L210.5 303.2 Z" fill="#000"/><path d="M201.5 254.9 L189.9 246.0 L187.5 250.4 Z" fill="#000"/><path d="M180.3 239 L184 242.5 L180.3 246 L176.6 242.5 Z" fill="#000"/><g stroke="#000" stroke-width="0.9"><line x1="197.2" y1="230.4" x2="198.2" y2="231.3"/><line x1="194.4" y1="232.9" x2="195.8" y2="234.3"/><line x1="191.5" y1="235.5" x2="193.5" y2="237.3"/><line x1="188.7" y1="238.0" x2="191.1" y2="240.2"/><line x1="185.9" y1="240.5" x2="188.7" y2="243.2"/><line x1="183.0" y1="243.1" x2="186.4" y2="246.2"/><line x1="180.2" y1="245.6" x2="184.0" y2="249.2"/><line x1="177.4" y1="248.1" x2="181.6" y2="252.1"/><line x1="174.5" y1="250.6" x2="179.3" y2="255.1"/><line x1="171.7" y1="253.2" x2="176.9" y2="258.1"/><line x1="177.3" y1="295.2" x2="178.5" y2="295.7"/><line x1="175.7" y1="298.3" x2="177.6" y2="299.0"/><line x1="174.2" y1="301.3" x2="176.8" y2="302.3"/><line x1="172.6" y1="304.3" x2="175.9" y2="305.6"/><line x1="171.1" y1="307.4" x2="175.0" y2="308.9"/><line x1="169.5" y1="310.4" x2="174.1" y2="312.1"/><line x1="168.0" y1="313.4" x2="173.2" y2="315.4"/><line x1="166" y1="316.5" x2="173" y2="316.5"/></g></svg>
<div class="t" style="left:197px;top:214px;font-size:10.5px;color:#111;line-height:1">17</div>
<div class="t" style="left:212px;top:204px;font-size:10.5px;color:#111;line-height:1">12</div>
<div class="t" style="left:298px;top:204px;font-size:10.5px;color:#111;line-height:1">16</div>
<div class="t" style="left:258px;top:218px;font-size:10.5px;color:#111;line-height:1">13</div>
<div class="t" style="left:176px;top:230px;font-size:10.5px;color:#111;line-height:1">1</div>
<div class="t" style="left:211px;top:234px;font-size:10.5px;color:#111;line-height:1">10</div>
<div class="t" style="left:144px;top:249px;font-size:10.5px;color:#111;line-height:1">2</div>
<div class="t" style="left:272px;top:243px;font-size:10.5px;color:#111;line-height:1">14</div>
<div class="t" style="left:189px;top:256px;font-size:10.5px;color:#111;line-height:1">11</div>
<div class="t" style="left:236px;top:258px;font-size:10.5px;color:#111;line-height:1">9</div>
<div class="t" style="left:166px;top:274px;font-size:10.5px;color:#111;line-height:1">20</div>
<div class="t" style="left:207px;top:275px;font-size:10.5px;color:#111;line-height:1">5</div>
<div class="t" style="left:236px;top:275px;font-size:10.5px;color:#111;line-height:1">8</div>
<div class="t" style="left:144px;top:283px;font-size:10.5px;color:#111;line-height:1">3</div>
<div class="t" style="left:298px;top:285px;font-size:10.5px;color:#111;line-height:1">15</div>
<div class="t" style="left:182px;top:296px;font-size:10.5px;color:#111;line-height:1">4</div>
<div class="t" style="left:202px;top:305px;font-size:10.5px;color:#111;line-height:1">6</div>
<div class="t" style="left:240px;top:304px;font-size:10.5px;color:#111;line-height:1">7</div>
<div class="t" style="left:162px;top:323px;font-size:10.5px;color:#111;line-height:1">19</div>
<div class="t" style="left:265px;top:176px;font-size:12.5px;color:#111;line-height:1">H</div>
<div class="t" style="left:242px;top:226px;font-size:12.5px;color:#111;line-height:1">H</div>
<div class="t" style="left:265px;top:262px;font-size:12.5px;color:#111;line-height:1">H</div>
<div class="t" style="left:271px;top:292px;font-size:12.5px;color:#111;line-height:1">H</div>
<div class="t" style="left:187px;top:308px;font-size:12.5px;color:#111;line-height:1">H</div>
<div class="t" style="left:163px;top:261px;font-size:12.5px;color:#111;line-height:1">NH</div>
<div class="a" style="left:610px;top:0px;width:4px;height:556px;background:#fff"></div>
<div class="a" style="left:614px;top:0px;width:598px;height:15px;background:linear-gradient(#bcd0e8,#c9d9ee)"></div>
<div class="a" style="left:614px;top:15px;width:598px;height:1px;background:#c9d7ea"></div>
<svg class="a" style="left:614px;top:0px;" width="15" height="14" viewBox="0 0 15 14"><rect x="1.5" y="0.5" width="12" height="12" fill="#f4f6fa" stroke="#5a6a9a"/><circle cx="7" cy="6" r="4" fill="#2a5fd0"/><circle cx="5.5" cy="4.5" r="1.6" fill="#9ac0ff"/><path d="M9 9 L12 12" stroke="#c02020" stroke-width="1.5"/></svg>
<div class="t" style="left:632px;top:0px;font-size:12.5px;color:#1e1e1e;letter-spacing:-0.45px">ACD/3D Viewer (Freeware) - [noname02.s3d]</div>
<div class="a" style="left:1128px;top:-3px;width:31px;height:16px;background:linear-gradient(#e3ebf5,#c6d4e6 50%,#b3c5dc);border:1px solid #7d8ea8;border-radius:3px;box-sizing:border-box"></div>
<svg class="a" style="left:1128px;top:0px;" width="31" height="13" viewBox="0 0 31 13"><rect x="10.5" y="5.5" width="10" height="3" fill="#fff" stroke="#4a5060"/></svg>
<div class="a" style="left:1161px;top:-3px;width:31px;height:16px;background:linear-gradient(#e3ebf5,#c6d4e6 50%,#b3c5dc);border:1px solid #7d8ea8;border-radius:3px;box-sizing:border-box"></div>
<svg class="a" style="left:1161px;top:0px;" width="31" height="13" viewBox="0 0 31 13"><rect x="10.5" y="1.5" width="10" height="7" fill="#fff" stroke="#4a5060"/><rect x="13" y="4" width="5" height="2" fill="#4a5060"/></svg>
<div class="a" style="left:1194px;top:-3px;width:22px;height:16px;background:linear-gradient(#e8a090,#d05a40 50%,#c04020);border:1px solid #8a4a40;border-radius:3px;box-sizing:border-box"></div>
<svg class="a" style="left:1194px;top:0px;" width="18" height="13" viewBox="0 0 18 13"><path d="M6 1 L13 9 M13 1 L6 9" stroke="#fff" stroke-width="2.4"/></svg>
<div class="a" style="left:614px;top:16px;width:598px;height:20px;background:linear-gradient(#edf3fb,#e3ecf8)"></div>
<div class="t" style="left:617px;top:20px;font-size:12px;color:#1e2a5a"><u>F</u>ile</div>
<div class="t" style="left:649.5px;top:20px;font-size:12px;color:#1e2a5a"><u>E</u>dit</div>
<div class="t" style="left:683px;top:20px;font-size:12px;color:#1e2a5a"><u>V</u>iew</div>
<div class="t" style="left:722px;top:20px;font-size:12px;color:#1e2a5a"><u>T</u>ools</div>
<div class="t" style="left:765px;top:20px;font-size:12px;color:#1e2a5a"><u>O</u>ptions</div>
<div class="t" style="left:821px;top:20px;font-size:12px;color:#1e2a5a"><u>A</u>CD/Labs</div>
<div class="t" style="left:888px;top:20px;font-size:12px;color:#1e2a5a"><u>H</u>elp</div>
<div class="a" style="left:614px;top:36px;width:598px;height:31px;background:linear-gradient(#e0eaf7,#d5e1f2)"></div>
<div class="a" style="left:668px;top:41px;width:1px;height:21px;background:#b3c3da"></div>
<div class="a" style="left:728px;top:41px;width:1px;height:21px;background:#b3c3da"></div>
<div class="a" style="left:893px;top:41px;width:1px;height:21px;background:#b3c3da"></div>
<div class="a" style="left:1056px;top:41px;width:1px;height:21px;background:#b3c3da"></div>
<div class="a" style="left:1090px;top:41px;width:1px;height:21px;background:#b3c3da"></div>
<div class="a" style="left:1150px;top:41px;width:1px;height:21px;background:#b3c3da"></div>
<div class="a" style="left:757px;top:38px;width:27px;height:26px;background:#f9f5e3;border:1px solid #8e9cae;box-sizing:border-box"></div>
<div class="a" style="left:948px;top:38px;width:27px;height:26px;background:#f9f5e3;border:1px solid #8e9cae;box-sizing:border-box"></div>
<div class="a" style="left:1060px;top:38px;width:27px;height:26px;background:#f9f5e3;border:1px solid #8e9cae;box-sizing:border-box"></div>
<svg class="a" style="left:0px;top:0px;" width="1212" height="67" viewBox="0 0 1212 67"><defs><radialGradient id="rs" cx="0.35" cy="0.3" r="0.7"><stop offset="0" stop-color="#ffe8e8"/><stop offset="0.5" stop-color="#e07878"/><stop offset="1" stop-color="#b03a3a"/></radialGradient><radialGradient id="bls" cx="0.35" cy="0.3" r="0.7"><stop offset="0" stop-color="#a0e0ff"/><stop offset="0.5" stop-color="#1a8cf0"/><stop offset="1" stop-color="#0a40c0"/></radialGradient><radialGradient id="gs" cx="0.35" cy="0.3" r="0.7"><stop offset="0" stop-color="#ffffff"/><stop offset="1" stop-color="#a8a8a8"/></radialGradient></defs><path d="M616.5 48 H622 L623.5 46 H627 V49 H633 V59.5 H616.5 Z" fill="#d03030" stroke="#a01010"/><rect x="617.5" y="51" width="15" height="8" fill="#f07070"/><path d="M627 48 L632.5 42.5 M629 42.5 H632.5 V46" fill="none" stroke="#2020c0" stroke-width="1.2"/><rect x="644.5" y="44.5" width="14" height="14" fill="#2a2ad8" stroke="#0a0a90"/><rect x="647" y="45" width="9" height="5" fill="#f4f4fa"/><path d="M648 47 h2 M651.5 47 h3" stroke="#333"/><rect x="646.5" y="53" width="10" height="5.5" fill="#fff"/><rect x="648" y="54" width="7" height="4.5" fill="#2a2ad8"/><path d="M682 47 Q688 43 690 48 Q691.5 52.5 687.5 55.5" fill="none" stroke="#d02838" stroke-width="2.3"/><path d="M679.5 50 L681 44.5 L685 48.5 Z" fill="#d02838"/><path d="M716 47 Q710 43 708 48 Q706.5 52.5 710.5 55.5" fill="none" stroke="#c8c8c8" stroke-width="2.3"/><path d="M718.5 50 L717 44.5 L713 48.5 Z" fill="#c8c8c8"/><circle cx="744.5" cy="48" r="5.5" fill="url(#rs)"/><circle cx="743.0" cy="52.5" r="3.6" fill="url(#bls)"/><path d="M746.5 54 L748 59.5 M746 54 L751.5 56 M747 54.5 L751 58.5" stroke="#c01010" stroke-width="1.6"/><circle cx="767.5" cy="48" r="5.5" fill="url(#rs)"/><circle cx="766.0" cy="52.5" r="3.6" fill="url(#bls)"/><path d="M765 59 Q770 55 773 54 L780 58.5 M773 54 L773 47" fill="none" stroke="#c01010" stroke-width="1.3"/><path d="M773 45 L771 49 H775 Z M781 59 L776.5 58.5 L779 55.5 Z" fill="#c01010"/><circle cx="793" cy="48" r="5.5" fill="url(#rs)"/><circle cx="791.5" cy="52.5" r="3.6" fill="url(#bls)"/><path d="M796 58.5 Q801 54 801 44" fill="none" stroke="#c01010" stroke-width="1.3"/><path d="M801 42.5 L799 46.5 H803 Z M795 59.5 L795.5 55.5 L798.5 57.5 Z" fill="#c01010"/><circle cx="819" cy="48" r="5.5" fill="url(#rs)"/><circle cx="817.5" cy="52.5" r="3.6" fill="url(#bls)"/><path d="M817 59 Q824 59 826 51" fill="none" stroke="#c01010" stroke-width="1.3"/><path d="M826.5 49 L824 52.5 L828 53 Z" fill="#c01010"/><circle cx="845" cy="48" r="5.5" fill="url(#rs)"/><circle cx="843.5" cy="52.5" r="3.6" fill="url(#bls)"/><path d="M852 50 V60 M847 52.5 H857" stroke="#c01010" stroke-width="1.4"/><path d="M858 52.5 L854.5 50.5 V54.5 Z M852 61 L850 57.5 H854 Z" fill="#c01010"/><circle cx="871" cy="48" r="5.5" fill="url(#rs)"/><circle cx="869.5" cy="52.5" r="3.6" fill="url(#bls)"/><circle cx="876.5" cy="51.5" r="4.5" fill="#fff" fill-opacity="0.5" stroke="#1a1ac8" stroke-width="1.4"/><path d="M874.5 51.5 h4 M876.5 49.5 v4" stroke="#1a1ac8" stroke-width="1.1"/><path d="M880 55 L884 59" stroke="#1a1ac8" stroke-width="2.2"/><path d="M905 50 H913" stroke="#1a1ad0" stroke-width="1.3"/><path d="M900 45 L905 50 L900 57 M918 45 L913 50 L918 57" fill="none" stroke="#1a1ad0" stroke-width="1.2"/><path d="M900 45 L902 47 M918 45 L916 47 M900 57 L902 54.5 M918 57 L916 54.5" stroke="#c01010" stroke-width="1.3"/><path d="M932 49 H940 M932 51 H940" stroke="#1a1ad0" stroke-width="1.3"/><path d="M926 45 L932 50 L926 56 M946 45 L940 50 L946 56" fill="none" stroke="#1a1ad0" stroke-width="2"/><path d="M926 45 L928.5 47 M946 45 L943.5 47 M926 56 L928.5 54 M946 56 L943.5 54" stroke="#c01010" stroke-width="2.2"/><path d="M955 44 L958 50 H964 L967 44 M955 56 L958 50 M964 50 L967 56" fill="none" stroke="#1a60d0" stroke-width="1"/><circle cx="954" cy="44" r="2.4" fill="url(#rs)"/><circle cx="967" cy="44" r="2.4" fill="url(#rs)"/><circle cx="954" cy="56.5" r="2.4" fill="url(#rs)"/><circle cx="967" cy="56.5" r="2.4" fill="url(#rs)"/><circle cx="958" cy="50" r="2.6" fill="url(#bls)"/><circle cx="964" cy="50" r="2.6" fill="url(#bls)"/><g fill="url(#gs)"><circle cx="981.5" cy="45.5" r="2.8"/><circle cx="993.5" cy="45.5" r="2.8"/><circle cx="981.5" cy="55.5" r="2.8"/><circle cx="993.5" cy="55.5" r="2.8"/><ellipse cx="987.5" cy="50.5" rx="7" ry="4.5"/></g><g fill="#a8a8a8"><rect x="1007" y="44" width="1" height="1"/><rect x="1009" y="44" width="1" height="1"/><rect x="1017" y="44" width="1" height="1"/><rect x="1019" y="44" width="1" height="1"/><rect x="1005" y="46" width="1" height="1"/><rect x="1007" y="46" width="1" height="1"/><rect x="1009" y="46" width="1" height="1"/><rect x="1011" y="46" width="1" height="1"/><rect x="1015" y="46" width="1" height="1"/><rect x="1017" y="46" width="1" height="1"/><rect x="1019" y="46" width="1" height="1"/><rect x="1021" y="46" width="1" height="1"/><rect x="1005" y="48" width="1" height="1"/><rect x="1007" y="48" width="1" height="1"/><rect x="1009" y="48" width="1" height="1"/><rect x="1011" y="48" width="1" height="1"/><rect x="1013" y="48" width="1" height="1"/><rect x="1015" y="48" width="1" height="1"/><rect x="1017" y="48" width="1" height="1"/><rect x="1019" y="48" width="1" height="1"/><rect x="1021" y="48" width="1" height="1"/><rect x="1007" y="50" width="1" height="1"/><rect x="1009" y="50" width="1" height="1"/><rect x="1011" y="50" width="1" height="1"/><rect x="1013" y="50" width="1" height="1"/><rect x="1015" y="50" width="1" height="1"/><rect x="1017" y="50" width="1" height="1"/><rect x="1019" y="50" width="1" height="1"/><rect x="1005" y="52" width="1" height="1"/><rect x="1007" y="52" width="1" height="1"/><rect x="1009" y="52" width="1" height="1"/><rect x="1011" y="52" width="1" height="1"/><rect x="1013" y="52" width="1" height="1"/><rect x="1015" y="52" width="1" height="1"/><rect x="1017" y="52" width="1" height="1"/><rect x="1019" y="52" width="1" height="1"/><rect x="1021" y="52" width="1" height="1"/><rect x="1005" y="54" width="1" height="1"/><rect x="1007" y="54" width="1" height="1"/><rect x="1009" y="54" width="1" height="1"/><rect x="1011" y="54" width="1" height="1"/><rect x="1015" y="54" width="1" height="1"/><rect x="1017" y="54" width="1" height="1"/><rect x="1019" y="54" width="1" height="1"/><rect x="1021" y="54" width="1" height="1"/><rect x="1007" y="56" width="1" height="1"/><rect x="1009" y="56" width="1" height="1"/><rect x="1017" y="56" width="1" height="1"/><rect x="1019" y="56" width="1" height="1"/></g><g fill="#b01010"><circle cx="1032" cy="45.5" r="3"/><circle cx="1047" cy="45.5" r="3"/><circle cx="1032" cy="55.5" r="3"/><circle cx="1047" cy="55.5" r="3"/></g><ellipse cx="1039.5" cy="50.5" rx="8" ry="5" fill="#1010f0"/><g fill="#101060"><rect x="1067" y="44" width="1" height="1"/><rect x="1069" y="44" width="1" height="1"/><rect x="1077" y="44" width="1" height="1"/><rect x="1079" y="44" width="1" height="1"/><rect x="1065" y="46" width="1" height="1"/><rect x="1067" y="46" width="1" height="1"/><rect x="1069" y="46" width="1" height="1"/><rect x="1071" y="46" width="1" height="1"/><rect x="1075" y="46" width="1" height="1"/><rect x="1077" y="46" width="1" height="1"/><rect x="1079" y="46" width="1" height="1"/><rect x="1081" y="46" width="1" height="1"/><rect x="1065" y="48" width="1" height="1"/><rect x="1067" y="48" width="1" height="1"/><rect x="1069" y="48" width="1" height="1"/><rect x="1071" y="48" width="1" height="1"/><rect x="1073" y="48" width="1" height="1"/><rect x="1075" y="48" width="1" height="1"/><rect x="1077" y="48" width="1" height="1"/><rect x="1079" y="48" width="1" height="1"/><rect x="1081" y="48" width="1" height="1"/><rect x="1067" y="50" width="1" height="1"/><rect x="1069" y="50" width="1" height="1"/><rect x="1071" y="50" width="1" height="1"/><rect x="1073" y="50" width="1" height="1"/><rect x="1075" y="50" width="1" height="1"/><rect x="1077" y="50" width="1" height="1"/><rect x="1079" y="50" width="1" height="1"/><rect x="1065" y="52" width="1" height="1"/><rect x="1067" y="52" width="1" height="1"/><rect x="1069" y="52" width="1" height="1"/><rect x="1071" y="52" width="1" height="1"/><rect x="1073" y="52" width="1" height="1"/><rect x="1075" y="52" width="1" height="1"/><rect x="1077" y="52" width="1" height="1"/><rect x="1079" y="52" width="1" height="1"/><rect x="1081" y="52" width="1" height="1"/><rect x="1065" y="54" width="1" height="1"/><rect x="1067" y="54" width="1" height="1"/><rect x="1069" y="54" width="1" height="1"/><rect x="1071" y="54" width="1" height="1"/><rect x="1075" y="54" width="1" height="1"/><rect x="1077" y="54" width="1" height="1"/><rect x="1079" y="54" width="1" height="1"/><rect x="1081" y="54" width="1" height="1"/><rect x="1067" y="56" width="1" height="1"/><rect x="1069" y="56" width="1" height="1"/><rect x="1077" y="56" width="1" height="1"/><rect x="1079" y="56" width="1" height="1"/></g><circle cx="1101.5" cy="56.5" r="2.6" fill="url(#bls)"/><circle cx="1112" cy="45.5" r="4.2" fill="url(#bls)"/><path d="M1103.5 54.5 L1107.5 50.5" stroke="#b01010" stroke-width="1.6"/><path d="M1109 49 L1104.5 50 L1108 53.5 Z" fill="#b01010"/><circle cx="1138.5" cy="56.5" r="2.6" fill="url(#bls)"/><circle cx="1128" cy="45.5" r="4.2" fill="url(#bls)"/><path d="M1131 49 L1135 53" stroke="#b01010" stroke-width="1.6"/><path d="M1136.5 54.5 L1132 53.5 L1135.5 50 Z" fill="#b01010"/><path d="M1160.5 49.5 H1172" stroke="#111" stroke-width="1.1"/><circle cx="1160.5" cy="49.5" r="2.6" fill="url(#bls)"/><circle cx="1172.5" cy="49.5" r="3.6" fill="url(#rs)"/><path d="M1160 55 H1173" stroke="#40d8e8" stroke-width="1"/><path d="M1185.5 54 L1193 46.5 L1200.5 54" fill="none" stroke="#111" stroke-width="1.1"/><path d="M1187 55 Q1193 58 1199 55" fill="none" stroke="#40d8e8" stroke-width="1"/><circle cx="1193" cy="46.5" r="3" fill="url(#rs)"/><circle cx="1185.5" cy="54" r="2.6" fill="url(#bls)"/><circle cx="1200.5" cy="54" r="2.6" fill="url(#bls)"/></svg>
<div class="a" style="left:614px;top:67px;width:598px;height:489px;background:#000"></div>
<svg class="a" style="left:614px;top:67px;" width="598" height="489" viewBox="0 0 598 489"><defs><radialGradient id="gc" cx="0.45" cy="0.5" r="0.55"><stop offset="0" stop-color="#30f0f0"/><stop offset="0.6" stop-color="#10d4d8"/><stop offset="1" stop-color="#00a0a8"/></radialGradient><linearGradient id="bgr" x1="0" y1="0" x2="0" y2="1"><stop offset="0" stop-color="#08b0b4"/><stop offset="0.5" stop-color="#30e0e0"/><stop offset="1" stop-color="#08b0b4"/></linearGradient><radialGradient id="gn" cx="0.45" cy="0.45" r="0.6"><stop offset="0" stop-color="#2020f0"/><stop offset="0.6" stop-color="#0a0ad0"/><stop offset="1" stop-color="#00008a"/></radialGradient><linearGradient id="gw" x1="0" y1="0" x2="1" y2="0"><stop offset="0" stop-color="#909090"/><stop offset="0.45" stop-color="#ffffff"/><stop offset="1" stop-color="#a0a0a0"/></linearGradient><pattern id="pd" width="30" height="30" patternUnits="userSpaceOnUse"><g fill="#90ecec"><rect x="0" y="0" width="1" height="1"/><rect x="5" y="1" width="1" height="1"/><rect x="11" y="1" width="1" height="1"/><rect x="17" y="0" width="1" height="1"/><rect x="24" y="0" width="1" height="1"/><rect x="2" y="4" width="1" height="1"/><rect x="9" y="4" width="1" height="1"/><rect x="14" y="4" width="1" height="1"/><rect x="20" y="3" width="1" height="1"/><rect x="27" y="3" width="1" height="1"/><rect x="29" y="7" width="1" height="1"/><rect x="6" y="6" width="1" height="1"/><rect x="12" y="6" width="1" height="1"/><rect x="17" y="7" width="1" height="1"/><rect x="24" y="6" width="1" height="1"/><rect x="4" y="9" width="1" height="1"/><rect x="10" y="9" width="1" height="1"/><rect x="15" y="10" width="1" height="1"/><rect x="20" y="10" width="1" height="1"/><rect x="28" y="9" width="1" height="1"/><rect x="0" y="13" width="1" height="1"/><rect x="13" y="12" width="1" height="1"/><rect x="18" y="12" width="1" height="1"/><rect x="23" y="13" width="1" height="1"/><rect x="3" y="15" width="1" height="1"/><rect x="10" y="16" width="1" height="1"/><rect x="14" y="15" width="1" height="1"/><rect x="22" y="16" width="1" height="1"/><rect x="26" y="16" width="1" height="1"/><rect x="1" y="18" width="1" height="1"/><rect x="6" y="18" width="1" height="1"/><rect x="12" y="18" width="1" height="1"/><rect x="19" y="18" width="1" height="1"/><rect x="24" y="18" width="1" height="1"/><rect x="4" y="21" width="1" height="1"/><rect x="10" y="21" width="1" height="1"/><rect x="16" y="22" width="1" height="1"/><rect x="21" y="21" width="1" height="1"/><rect x="27" y="22" width="1" height="1"/><rect x="0" y="25" width="1" height="1"/><rect x="6" y="24" width="1" height="1"/><rect x="12" y="24" width="1" height="1"/><rect x="17" y="24" width="1" height="1"/><rect x="24" y="24" width="1" height="1"/><rect x="3" y="27" width="1" height="1"/><rect x="9" y="27" width="1" height="1"/><rect x="14" y="27" width="1" height="1"/><rect x="22" y="27" width="1" height="1"/><rect x="26" y="27" width="1" height="1"/></g></pattern><pattern id="pd2" width="30" height="30" patternUnits="userSpaceOnUse"><g fill="#88e4e4"><rect x="3" y="1" width="1" height="1"/><rect x="12" y="1" width="1" height="1"/><rect x="15" y="1" width="1" height="1"/><rect x="27" y="1" width="1" height="1"/><rect x="4" y="4" width="1" height="1"/><rect x="16" y="4" width="1" height="1"/><rect x="27" y="4" width="1" height="1"/><rect x="16" y="7" width="1" height="1"/><rect x="18" y="7" width="1" height="1"/><rect x="24" y="7" width="1" height="1"/><rect x="1" y="10" width="1" height="1"/><rect x="10" y="10" width="1" height="1"/><rect x="24" y="10" width="1" height="1"/><rect x="4" y="13" width="1" height="1"/><rect x="9" y="13" width="1" height="1"/><rect x="19" y="13" width="1" height="1"/><rect x="6" y="16" width="1" height="1"/><rect x="25" y="16" width="1" height="1"/><rect x="0" y="19" width="1" height="1"/><rect x="16" y="19" width="1" height="1"/><rect x="19" y="19" width="1" height="1"/><rect x="27" y="19" width="1" height="1"/><rect x="0" y="22" width="1" height="1"/><rect x="4" y="22" width="1" height="1"/><rect x="10" y="22" width="1" height="1"/><rect x="21" y="22" width="1" height="1"/><rect x="0" y="25" width="1" height="1"/><rect x="13" y="25" width="1" height="1"/><rect x="15" y="25" width="1" height="1"/><rect x="1" y="28" width="1" height="1"/><rect x="21" y="28" width="1" height="1"/><rect x="28" y="28" width="1" height="1"/></g></pattern><pattern id="pw" width="30" height="30" patternUnits="userSpaceOnUse"><g fill="#f0ffff"><rect x="0" y="0" width="1" height="1"/><rect x="5" y="1" width="1" height="1"/><rect x="11" y="1" width="1" height="1"/><rect x="17" y="0" width="1" height="1"/><rect x="24" y="0" width="1" height="1"/><rect x="2" y="4" width="1" height="1"/><rect x="9" y="4" width="1" height="1"/><rect x="14" y="4" width="1" height="1"/><rect x="20" y="3" width="1" height="1"/><rect x="27" y="3" width="1" height="1"/><rect x="29" y="7" width="1" height="1"/><rect x="6" y="6" width="1" height="1"/><rect x="12" y="6" width="1" height="1"/><rect x="17" y="7" width="1" height="1"/><rect x="24" y="6" width="1" height="1"/><rect x="4" y="9" width="1" height="1"/><rect x="10" y="9" width="1" height="1"/><rect x="15" y="10" width="1" height="1"/><rect x="20" y="10" width="1" height="1"/><rect x="28" y="9" width="1" height="1"/><rect x="0" y="13" width="1" height="1"/><rect x="13" y="12" width="1" height="1"/><rect x="18" y="12" width="1" height="1"/><rect x="23" y="13" width="1" height="1"/><rect x="3" y="15" width="1" height="1"/><rect x="10" y="16" width="1" height="1"/><rect x="14" y="15" width="1" height="1"/><rect x="22" y="16" width="1" height="1"/><rect x="26" y="16" width="1" height="1"/><rect x="1" y="18" width="1" height="1"/><rect x="6" y="18" width="1" height="1"/><rect x="12" y="18" width="1" height="1"/><rect x="19" y="18" width="1" height="1"/><rect x="24" y="18" width="1" height="1"/><rect x="4" y="21" width="1" height="1"/><rect x="10" y="21" width="1" height="1"/><rect x="16" y="22" width="1" height="1"/><rect x="21" y="21" width="1" height="1"/><rect x="27" y="22" width="1" height="1"/><rect x="0" y="25" width="1" height="1"/><rect x="6" y="24" width="1" height="1"/><rect x="12" y="24" width="1" height="1"/><rect x="17" y="24" width="1" height="1"/><rect x="24" y="24" width="1" height="1"/><rect x="3" y="27" width="1" height="1"/><rect x="9" y="27" width="1" height="1"/><rect x="14" y="27" width="1" height="1"/><rect x="22" y="27" width="1" height="1"/><rect x="26" y="27" width="1" height="1"/></g></pattern><pattern id="pb" width="30" height="30" patternUnits="userSpaceOnUse"><g fill="#1818d0"><rect x="0" y="0" width="1" height="1"/><rect x="5" y="1" width="1" height="1"/><rect x="11" y="1" width="1" height="1"/><rect x="17" y="0" width="1" height="1"/><rect x="24" y="0" width="1" height="1"/><rect x="2" y="4" width="1" height="1"/><rect x="9" y="4" width="1" height="1"/><rect x="14" y="4" width="1" height="1"/><rect x="20" y="3" width="1" height="1"/><rect x="27" y="3" width="1" height="1"/><rect x="29" y="7" width="1" height="1"/><rect x="6" y="6" width="1" height="1"/><rect x="12" y="6" width="1" height="1"/><rect x="17" y="7" width="1" height="1"/><rect x="24" y="6" width="1" height="1"/><rect x="4" y="9" width="1" height="1"/><rect x="10" y="9" width="1" height="1"/><rect x="15" y="10" width="1" height="1"/><rect x="20" y="10" width="1" height="1"/><rect x="28" y="9" width="1" height="1"/><rect x="0" y="13" width="1" height="1"/><rect x="13" y="12" width="1" height="1"/><rect x="18" y="12" width="1" height="1"/><rect x="23" y="13" width="1" height="1"/><rect x="3" y="15" width="1" height="1"/><rect x="10" y="16" width="1" height="1"/><rect x="14" y="15" width="1" height="1"/><rect x="22" y="16" width="1" height="1"/><rect x="26" y="16" width="1" height="1"/><rect x="1" y="18" width="1" height="1"/><rect x="6" y="18" width="1" height="1"/><rect x="12" y="18" width="1" height="1"/><rect x="19" y="18" width="1" height="1"/><rect x="24" y="18" width="1" height="1"/><rect x="4" y="21" width="1" height="1"/><rect x="10" y="21" width="1" height="1"/><rect x="16" y="22" width="1" height="1"/><rect x="21" y="21" width="1" height="1"/><rect x="27" y="22" width="1" height="1"/><rect x="0" y="25" width="1" height="1"/><rect x="6" y="24" width="1" height="1"/><rect x="12" y="24" width="1" height="1"/><rect x="17" y="24" width="1" height="1"/><rect x="24" y="24" width="1" height="1"/><rect x="3" y="27" width="1" height="1"/><rect x="9" y="27" width="1" height="1"/><rect x="14" y="27" width="1" height="1"/><rect x="22" y="27" width="1" height="1"/><rect x="26" y="27" width="1" height="1"/></g></pattern></defs><g fill="url(#pd)"><circle cx="301.70000000000005" cy="193" r="51"/><circle cx="369.9" cy="190.5" r="51"/><circle cx="410.5" cy="191" r="51"/><circle cx="267" cy="212" r="51"/><circle cx="232.29999999999995" cy="232" r="51"/><circle cx="301.5" cy="231.5" r="51"/><circle cx="370" cy="229.5" r="51"/><circle cx="200" cy="254" r="51"/><circle cx="266.70000000000005" cy="252" r="51"/><circle cx="336" cy="252" r="51"/><circle cx="220.5" cy="268.5" r="51"/><circle cx="201.79999999999995" cy="290" r="51"/><circle cx="267.5" cy="290" r="51"/><circle cx="335.5" cy="290.5" r="51"/><circle cx="410.5" cy="290" r="51"/><circle cx="235.5" cy="310.5" r="51"/><circle cx="281" cy="318" r="51"/><circle cx="319.5" cy="317" r="51"/><circle cx="223.79999999999995" cy="342.5" r="51"/><circle cx="369.9" cy="140.5" r="25"/><circle cx="335.5" cy="210.5" r="25"/><circle cx="370" cy="272" r="25"/><circle cx="377.5" cy="314.5" r="25"/><circle cx="256.29999999999995" cy="338" r="25"/></g><mask id="band"><g fill="#fff"><circle cx="301.70000000000005" cy="193" r="51"/><circle cx="369.9" cy="190.5" r="51"/><circle cx="410.5" cy="191" r="51"/><circle cx="267" cy="212" r="51"/><circle cx="232.29999999999995" cy="232" r="51"/><circle cx="301.5" cy="231.5" r="51"/><circle cx="370" cy="229.5" r="51"/><circle cx="200" cy="254" r="51"/><circle cx="266.70000000000005" cy="252" r="51"/><circle cx="336" cy="252" r="51"/><circle cx="220.5" cy="268.5" r="51"/><circle cx="201.79999999999995" cy="290" r="51"/><circle cx="267.5" cy="290" r="51"/><circle cx="335.5" cy="290.5" r="51"/><circle cx="410.5" cy="290" r="51"/><circle cx="235.5" cy="310.5" r="51"/><circle cx="281" cy="318" r="51"/><circle cx="319.5" cy="317" r="51"/><circle cx="223.79999999999995" cy="342.5" r="51"/><circle cx="369.9" cy="140.5" r="25"/><circle cx="335.5" cy="210.5" r="25"/><circle cx="370" cy="272" r="25"/><circle cx="377.5" cy="314.5" r="25"/><circle cx="256.29999999999995" cy="338" r="25"/></g><g fill="#000"><circle cx="301.70000000000005" cy="193" r="43"/><circle cx="369.9" cy="190.5" r="43"/><circle cx="410.5" cy="191" r="43"/><circle cx="267" cy="212" r="43"/><circle cx="232.29999999999995" cy="232" r="43"/><circle cx="301.5" cy="231.5" r="43"/><circle cx="370" cy="229.5" r="43"/><circle cx="200" cy="254" r="43"/><circle cx="266.70000000000005" cy="252" r="43"/><circle cx="336" cy="252" r="43"/><circle cx="220.5" cy="268.5" r="43"/><circle cx="201.79999999999995" cy="290" r="43"/><circle cx="267.5" cy="290" r="43"/><circle cx="335.5" cy="290.5" r="43"/><circle cx="410.5" cy="290" r="43"/><circle cx="235.5" cy="310.5" r="43"/><circle cx="281" cy="318" r="43"/><circle cx="319.5" cy="317" r="43"/><circle cx="223.79999999999995" cy="342.5" r="43"/><circle cx="369.9" cy="140.5" r="17"/><circle cx="335.5" cy="210.5" r="17"/><circle cx="370" cy="272" r="17"/><circle cx="377.5" cy="314.5" r="17"/><circle cx="256.29999999999995" cy="338" r="17"/></g></mask><rect x="140" y="100" width="340" height="320" fill="url(#pd2)" mask="url(#band)"/><circle cx="369.9" cy="140.5" r="26" fill="#000"/><circle cx="369.9" cy="140.5" r="26" fill="url(#pw)"/><circle cx="220.5" cy="268.5" r="38" fill="#000" opacity="0.85"/><circle cx="220.5" cy="268.5" r="38" fill="url(#pb)"/><g stroke="#18cccf" stroke-width="9"><line x1="232.29999999999995" y1="232" x2="267" y2="212"/><line x1="267" y1="212" x2="266.70000000000005" y2="252"/><line x1="267" y1="212" x2="301.5" y2="231.5"/><line x1="267" y1="212" x2="319.5" y2="317"/><line x1="301.70000000000005" y1="193" x2="301.5" y2="231.5"/><line x1="232.29999999999995" y1="232" x2="200" y2="254"/><line x1="200" y1="254" x2="201.79999999999995" y2="290"/><line x1="201.79999999999995" y1="290" x2="235.5" y2="310.5"/><line x1="235.5" y1="310.5" x2="223.79999999999995" y2="342.5"/><line x1="235.5" y1="310.5" x2="267.5" y2="290"/><line x1="267.5" y1="290" x2="266.70000000000005" y2="252"/><line x1="267.5" y1="290" x2="281" y2="318"/><line x1="281" y1="318" x2="319.5" y2="317"/><line x1="319.5" y1="317" x2="335.5" y2="290.5"/><line x1="335.5" y1="290.5" x2="336" y2="252"/><line x1="336" y1="252" x2="301.5" y2="231.5"/><line x1="336" y1="252" x2="370" y2="229.5"/><line x1="370" y1="229.5" x2="369.9" y2="190.5"/><line x1="369.9" y1="190.5" x2="301.70000000000005" y2="193"/><line x1="369.9" y1="190.5" x2="410.5" y2="191"/><line x1="410.5" y1="191" x2="410.5" y2="290"/><line x1="410.5" y1="290" x2="335.5" y2="290.5"/></g><line x1="220.5" y1="268.5" x2="267" y2="212" stroke="#18cccf" stroke-width="9"/><line x1="220.5" y1="268.5" x2="243.75" y2="240.25" stroke="#0000e0" stroke-width="9"/><line x1="220.5" y1="268.5" x2="235.5" y2="310.5" stroke="#18cccf" stroke-width="9"/><line x1="220.5" y1="268.5" x2="228.0" y2="289.5" stroke="#0000e0" stroke-width="9"/><g stroke="#18cccf" stroke-width="8"><line x1="369.9" y1="190.5" x2="369.9" y2="165.5"/><line x1="301.5" y1="231.5" x2="318.5" y2="221.0"/><line x1="336" y1="252" x2="353.0" y2="262.0"/><line x1="335.5" y1="290.5" x2="356.5" y2="302.5"/><line x1="267.5" y1="290" x2="261.9" y2="314.0"/></g><g stroke="#d8d8d8" stroke-width="8" stroke-linecap="round"><line x1="369.9" y1="165.5" x2="369.9" y2="140.5"/><line x1="318.5" y1="221.0" x2="335.5" y2="210.5"/><line x1="353.0" y1="262.0" x2="370" y2="272"/><line x1="356.5" y1="302.5" x2="377.5" y2="314.5"/><line x1="261.9" y1="314.0" x2="256.29999999999995" y2="338"/></g><g stroke="#ffffff" stroke-width="3" stroke-linecap="round" opacity="0.6"><line x1="369.9" y1="165.5" x2="369.9" y2="140.5"/><line x1="318.5" y1="221.0" x2="335.5" y2="210.5"/><line x1="353.0" y1="262.0" x2="370" y2="272"/><line x1="356.5" y1="302.5" x2="377.5" y2="314.5"/><line x1="261.9" y1="314.0" x2="256.29999999999995" y2="338"/></g><circle cx="301.70000000000005" cy="193" r="13.5" fill="url(#gc)"/><circle cx="369.9" cy="190.5" r="13.5" fill="url(#gc)"/><circle cx="410.5" cy="191" r="13.5" fill="url(#gc)"/><circle cx="267" cy="212" r="13.5" fill="url(#gc)"/><circle cx="232.29999999999995" cy="232" r="13.5" fill="url(#gc)"/><circle cx="301.5" cy="231.5" r="13.5" fill="url(#gc)"/><circle cx="370" cy="229.5" r="13.5" fill="url(#gc)"/><circle cx="200" cy="254" r="13.5" fill="url(#gc)"/><circle cx="266.70000000000005" cy="252" r="13.5" fill="url(#gc)"/><circle cx="336" cy="252" r="13.5" fill="url(#gc)"/><circle cx="220.5" cy="268.5" r="15" fill="url(#gn)"/><circle cx="201.79999999999995" cy="290" r="13.5" fill="url(#gc)"/><circle cx="267.5" cy="290" r="13.5" fill="url(#gc)"/><circle cx="335.5" cy="290.5" r="13.5" fill="url(#gc)"/><circle cx="410.5" cy="290" r="13.5" fill="url(#gc)"/><circle cx="235.5" cy="310.5" r="13.5" fill="url(#gc)"/><circle cx="281" cy="318" r="13.5" fill="url(#gc)"/><circle cx="319.5" cy="317" r="13.5" fill="url(#gc)"/><circle cx="223.79999999999995" cy="342.5" r="13.5" fill="url(#gc)"/><g fill="url(#pd)" opacity="0.45"><circle cx="301.70000000000005" cy="193" r="51"/><circle cx="369.9" cy="190.5" r="51"/><circle cx="410.5" cy="191" r="51"/><circle cx="267" cy="212" r="51"/><circle cx="232.29999999999995" cy="232" r="51"/><circle cx="301.5" cy="231.5" r="51"/><circle cx="370" cy="229.5" r="51"/><circle cx="200" cy="254" r="51"/><circle cx="266.70000000000005" cy="252" r="51"/><circle cx="336" cy="252" r="51"/><circle cx="220.5" cy="268.5" r="51"/><circle cx="201.79999999999995" cy="290" r="51"/><circle cx="267.5" cy="290" r="51"/><circle cx="335.5" cy="290.5" r="51"/><circle cx="410.5" cy="290" r="51"/><circle cx="235.5" cy="310.5" r="51"/><circle cx="281" cy="318" r="51"/><circle cx="319.5" cy="317" r="51"/><circle cx="223.79999999999995" cy="342.5" r="51"/><circle cx="369.9" cy="140.5" r="25"/><circle cx="335.5" cy="210.5" r="25"/><circle cx="370" cy="272" r="25"/><circle cx="377.5" cy="314.5" r="25"/><circle cx="256.29999999999995" cy="338" r="25"/></g><circle cx="220.5" cy="268.5" r="38" fill="url(#pb)" opacity="0.8"/></svg>
</body></html>
